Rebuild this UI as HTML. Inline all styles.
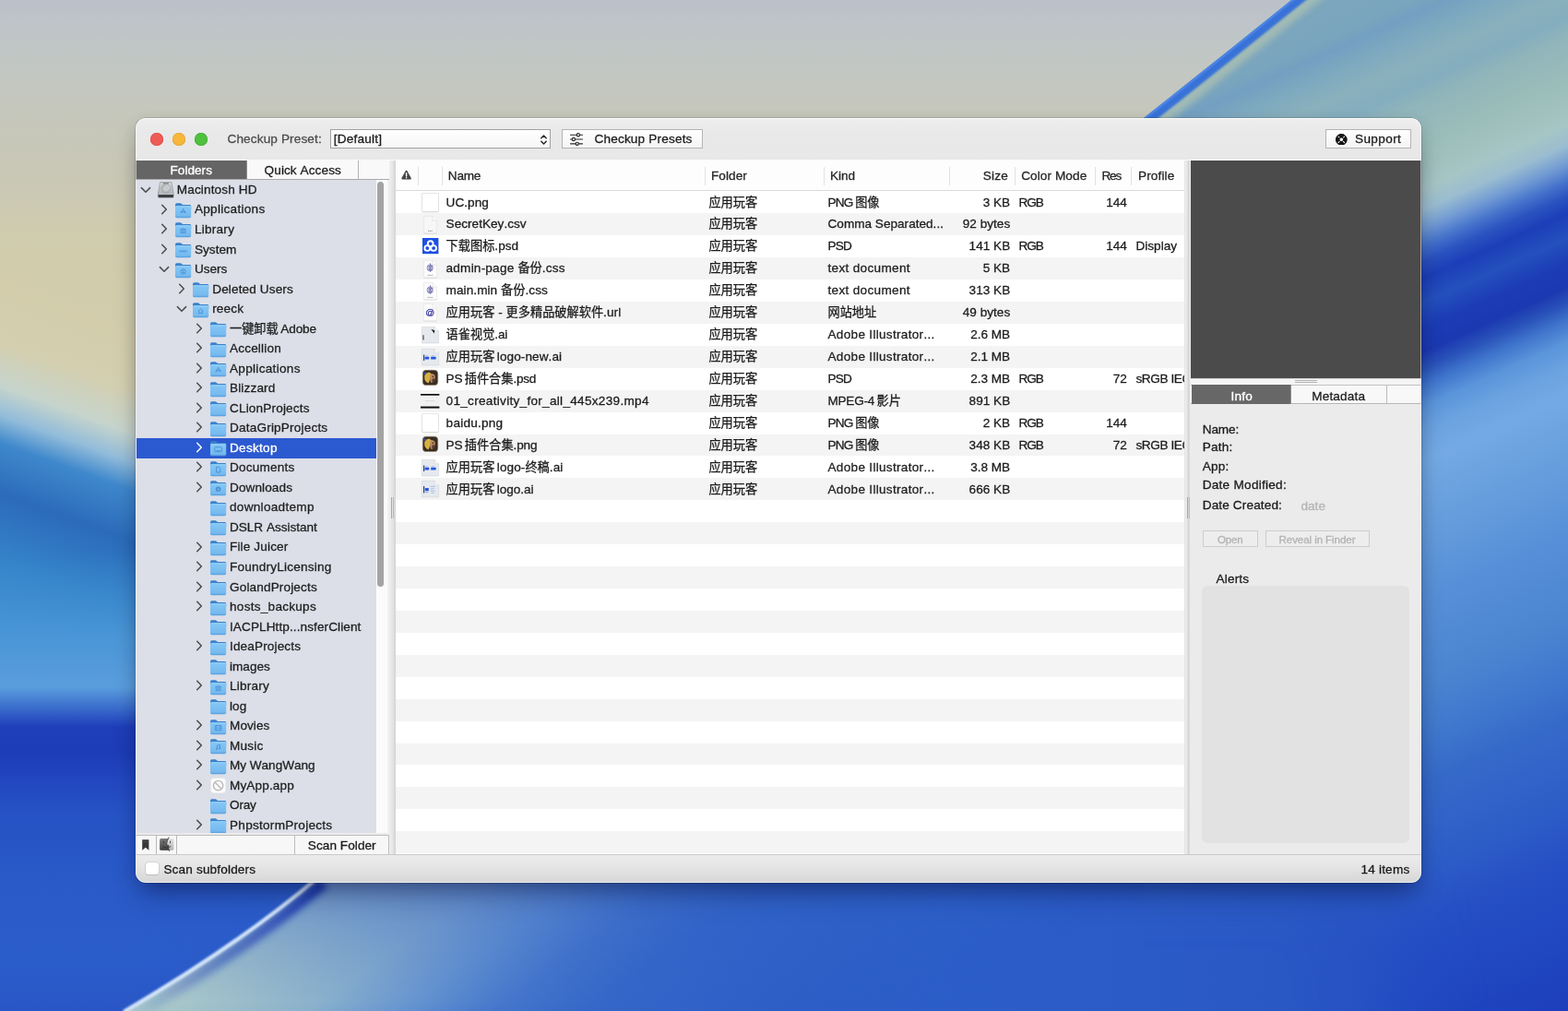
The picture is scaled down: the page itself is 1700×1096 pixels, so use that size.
<!DOCTYPE html><html lang="en"><head><meta charset="utf-8"><title>Checkup</title><style>html,body{margin:0;padding:0}body{width:1700px;height:1096px;position:relative;overflow:hidden;background:#2a58c6;font-family:"Liberation Sans","Noto Sans CJK SC",sans-serif;font-kerning:none;-webkit-font-smoothing:antialiased}
#wall{position:absolute;left:0;top:0;display:block}
#win{position:absolute;left:0;top:0;width:1700px;height:1096px;will-change:transform}
.t{position:absolute;white-space:nowrap;color:#1d1d1d;-webkit-text-stroke:.28px currentColor}
.cj{display:inline-block;font-family:"Liberation Sans","Noto Sans CJK SC",sans-serif;font-size:13.19px;letter-spacing:0;line-height:15px}
svg.ic{position:absolute;overflow:visible}
</style></head><body><svg width="0" height="0" style="position:absolute"><defs><linearGradient id="fTab" x1="0" y1="0" x2="0" y2="1"><stop offset="0" stop-color="#3a80c9"/><stop offset="1" stop-color="#4188d0"/></linearGradient>
<linearGradient id="fBody" x1="0" y1="0" x2="0" y2="1"><stop offset="0" stop-color="#8ccdf8"/><stop offset=".12" stop-color="#82c5f5"/><stop offset=".84" stop-color="#76b9ee"/><stop offset=".93" stop-color="#5ea8e4"/><stop offset="1" stop-color="#4f98dc"/></linearGradient>
<linearGradient id="hdBody" x1="0" y1="0" x2="0" y2="1"><stop offset="0" stop-color="#d9dbdd"/><stop offset="1" stop-color="#a9adb0"/></linearGradient>
</defs></svg><svg id="wall" width="1700" height="1096" viewBox="0 0 1700 1096">
<defs>
<linearGradient id="gBase" gradientUnits="userSpaceOnUse" x1="0" y1="0" x2="0" y2="1096"><stop offset="0.0000" stop-color="#bbc0c9"/><stop offset="0.0365" stop-color="#bfc6c7"/><stop offset="0.0730" stop-color="#c3c7c2"/><stop offset="0.1168" stop-color="#c6c7bb"/><stop offset="0.1734" stop-color="#c9c8b6"/><stop offset="0.2281" stop-color="#cfcbae"/><stop offset="0.2737" stop-color="#d3cdab"/><stop offset="0.3102" stop-color="#d3ceae"/><stop offset="0.7299" stop-color="#2a58c6"/><stop offset="1.0000" stop-color="#2855c5"/></linearGradient>
<linearGradient id="gL" gradientUnits="userSpaceOnUse" x1="31.9" y1="-88.5" x2="-350.6" y2="973.8"><stop offset="0.0000" stop-color="#bcc2c8"/><stop offset="0.0833" stop-color="#bcc2c8"/><stop offset="0.1900" stop-color="#c6c7bb"/><stop offset="0.2917" stop-color="#cfcbae"/><stop offset="0.3417" stop-color="#d3cdab"/><stop offset="0.3933" stop-color="#d3cfb0"/><stop offset="0.4317" stop-color="#c6d4cc"/><stop offset="0.4583" stop-color="#92bcda"/><stop offset="0.4833" stop-color="#3f88cc"/><stop offset="0.5292" stop-color="#2b6bba"/><stop offset="0.5917" stop-color="#3684ca"/><stop offset="0.6667" stop-color="#4a94d6"/><stop offset="1.0000" stop-color="#4a94d6"/></linearGradient>
<linearGradient id="gLD" gradientUnits="userSpaceOnUse" x1="0" y1="0" x2="0" y2="1096"><stop offset="0.0000" stop-color="#3886cc"/><stop offset="0.5474" stop-color="#3886cc"/><stop offset="0.6296" stop-color="#4a96d6"/><stop offset="0.6797" stop-color="#5a9ddd"/><stop offset="0.7007" stop-color="#3a6ccc"/><stop offset="0.7190" stop-color="#1e3eba"/><stop offset="0.7436" stop-color="#1c3cb8"/><stop offset="0.7755" stop-color="#2348c0"/><stop offset="0.8029" stop-color="#2552c4"/><stop offset="0.8759" stop-color="#2a5ac8"/><stop offset="0.9489" stop-color="#2a5cca"/><stop offset="1.0000" stop-color="#2956c6"/></linearGradient><linearGradient id="gR" gradientUnits="userSpaceOnUse" x1="224.5" y1="499.0" x2="696.4" y2="1547.6"><stop offset="0.0000" stop-color="#7fa8bc"/><stop offset="0.0714" stop-color="#7aa5be"/><stop offset="0.0833" stop-color="#73a0c1"/><stop offset="0.1031" stop-color="#7ea9bf"/><stop offset="0.1245" stop-color="#8ab0bc"/><stop offset="0.1459" stop-color="#84adbe"/><stop offset="0.1626" stop-color="#90b5ba"/><stop offset="0.2086" stop-color="#9ebfba"/><stop offset="0.2379" stop-color="#a6c5c6"/><stop offset="0.2554" stop-color="#9abdd0"/><stop offset="0.2712" stop-color="#739cd4"/><stop offset="0.2855" stop-color="#4875cc"/><stop offset="0.2998" stop-color="#2a52c0"/><stop offset="0.3140" stop-color="#1c3eb8"/><stop offset="0.3354" stop-color="#2450bd"/><stop offset="0.3569" stop-color="#1c3cb6"/><stop offset="0.3775" stop-color="#1b39b1"/><stop offset="0.3925" stop-color="#2a54ba"/><stop offset="0.4060" stop-color="#3f74cc"/><stop offset="0.4243" stop-color="#5a94da"/><stop offset="0.4441" stop-color="#6aa2e0"/><stop offset="0.4703" stop-color="#74aae4"/><stop offset="0.5178" stop-color="#68a0de"/><stop offset="0.5892" stop-color="#5890d8"/><stop offset="0.6685" stop-color="#4a84d0"/><stop offset="0.7082" stop-color="#4078ce"/><stop offset="0.7478" stop-color="#366ac9"/><stop offset="0.8271" stop-color="#2c5cc7"/><stop offset="0.8668" stop-color="#2650c4"/><stop offset="0.9429" stop-color="#2046c0"/><stop offset="1.0000" stop-color="#1d3ebc"/></linearGradient>
<linearGradient id="gDk" gradientUnits="userSpaceOnUse" x1="134" y1="1097" x2="346" y2="950"><stop offset="0" stop-color="#1b3cb4" stop-opacity="0"/><stop offset=".35" stop-color="#1b3cb4" stop-opacity=".35"/><stop offset="1" stop-color="#1a38ae" stop-opacity=".95"/></linearGradient><linearGradient id="gB" gradientUnits="userSpaceOnUse" x1="0" y1="0" x2="1700" y2="0"><stop offset="0" stop-color="#2a5cca"/><stop offset=".45" stop-color="#2a5ac6"/><stop offset=".6" stop-color="#2c5ec9"/><stop offset=".82" stop-color="#2958c5"/><stop offset="1" stop-color="#2046c0"/></linearGradient>
<linearGradient id="mLh" gradientUnits="userSpaceOnUse" x1="150" y1="0" x2="300" y2="0"><stop offset="0" stop-color="#fff"/><stop offset="1" stop-color="#000"/></linearGradient>
<linearGradient id="mBv" gradientUnits="userSpaceOnUse" x1="0" y1="900" x2="0" y2="965"><stop offset="0" stop-color="#000"/><stop offset="1" stop-color="#fff"/></linearGradient>
<linearGradient id="mBh" gradientUnits="userSpaceOnUse" x1="100" y1="0" x2="330" y2="0"><stop offset="0" stop-color="#000"/><stop offset="1" stop-color="#fff"/></linearGradient>
<linearGradient id="gP" gradientUnits="userSpaceOnUse" x1="134" y1="1097" x2="430.4" y2="1523.4"><stop offset="0" stop-color="#acc9cc"/><stop offset=".058" stop-color="#a6c5c9"/><stop offset=".217" stop-color="#8ab0cc"/><stop offset=".327" stop-color="#6a98d0" stop-opacity=".95"/><stop offset=".437" stop-color="#4a7ccc" stop-opacity=".85"/><stop offset=".546" stop-color="#3a6ec9" stop-opacity=".7"/><stop offset=".7" stop-color="#3468c8" stop-opacity=".5"/><stop offset="1" stop-color="#2c5cc8" stop-opacity="0"/></linearGradient>
<filter id="b1" x="-20%" y="-20%" width="140%" height="140%"><feGaussianBlur stdDeviation="1"/></filter>
<filter id="b4" x="-20%" y="-20%" width="140%" height="140%"><feGaussianBlur stdDeviation="3.5"/></filter>
<filter id="b40" x="-30%" y="-30%" width="160%" height="160%"><feGaussianBlur stdDeviation="45"/></filter>
<linearGradient id="mLv" gradientUnits="userSpaceOnUse" x1="0" y1="270" x2="0" y2="345"><stop offset="0" stop-color="#000"/><stop offset="1" stop-color="#000" stop-opacity="0"/></linearGradient><linearGradient id="mLv2" gradientUnits="userSpaceOnUse" x1="0" y1="600" x2="0" y2="690"><stop offset="0" stop-color="#000" stop-opacity="0"/><stop offset="1" stop-color="#000"/></linearGradient><linearGradient id="mLv3" gradientUnits="userSpaceOnUse" x1="0" y1="560" x2="0" y2="600"><stop offset="0" stop-color="#000"/><stop offset="1" stop-color="#000" stop-opacity="0"/></linearGradient><mask id="mL" maskUnits="userSpaceOnUse" x="0" y="0" width="1700" height="1096"><rect width="1700" height="1096" fill="url(#mLh)"/><rect width="1700" height="1096" fill="url(#mLv)"/><rect width="1700" height="1096" fill="url(#mLv2)"/></mask><mask id="mLD" maskUnits="userSpaceOnUse" x="0" y="0" width="1700" height="1096"><rect width="1700" height="1096" fill="url(#mLh)"/><rect width="1700" height="1096" fill="url(#mLv3)"/></mask>
<linearGradient id="mPv" gradientUnits="userSpaceOnUse" x1="0" y1="940" x2="0" y2="1085"><stop offset="0" stop-color="#6a6a6a"/><stop offset="1" stop-color="#fff"/></linearGradient><mask id="mP" maskUnits="userSpaceOnUse" x="0" y="0" width="1700" height="1096"><rect width="1700" height="1096" fill="url(#mPv)"/></mask><mask id="mB" maskUnits="userSpaceOnUse" x="0" y="0" width="1700" height="1096"><rect width="1700" height="1096" fill="url(#mBv)"/></mask>
<mask id="mR" maskUnits="userSpaceOnUse" x="0" y="0" width="1700" height="1096"><path d="M1200 -100H1900V1300H1560L1480 920H1200Z" fill="#fff" filter="url(#b40)"/><path d="M1200 -100H1900V900H1200Z" fill="#fff"/></mask>
<clipPath id="cpR"><path d="M1400.7 -0.5 Q1322 63 1239.8 128 V1096 H1700 V-0.5Z"/></clipPath>
<clipPath id="cpB"><path d="M134 1097 Q262 1022 346 950 L700 700 H1700 V1097Z"/></clipPath>
</defs>
<rect width="1700" height="1096" fill="url(#gBase)"/>
<g mask="url(#mB)"><rect x="0" y="890" width="1700" height="206" fill="url(#gB)"/></g>
<g mask="url(#mLD)"><rect width="320" height="1096" fill="url(#gLD)"/></g><g mask="url(#mL)"><rect width="320" height="1096" fill="url(#gL)"/></g>
<g clip-path="url(#cpB)"><g mask="url(#mP)"><rect x="0" y="700" width="1500" height="400" fill="url(#gP)"/></g></g>
<g clip-path="url(#cpB)"><path d="M134 1097 Q262 1022 346 950" transform="translate(5 7)" stroke="url(#gDk)" stroke-width="13" fill="none" filter="url(#b4)"/></g><path d="M134 1097 Q262 1022 346 950" stroke="#d3e5fa" stroke-width="4.2" fill="none" filter="url(#b1)"/>
<g clip-path="url(#cpR)"><g mask="url(#mR)"><rect x="1150" y="0" width="550" height="1096" fill="url(#gR)"/></g>
<path d="M1452 -41 L1400.7 -0.5 Q1322 63 1239.8 128 L1180 175" transform="translate(7.5 9.5)" stroke="#a9bfb4" stroke-width="15" fill="none" filter="url(#b4)" opacity=".85"/>
<path d="M1452 -41 L1400.7 -0.5 Q1322 63 1239.8 128 L1180 175" transform="translate(2.8 3.5)" stroke="#3872d8" stroke-width="11" fill="none" filter="url(#b1)"/>
<path d="M1452 -41 L1400.7 -0.5 Q1322 63 1239.8 128 L1180 175" transform="translate(.6 .8)" stroke="#5f94f2" stroke-width="2" fill="none" filter="url(#b1)" opacity=".9"/>
</g>
</svg><div class="" style="position:absolute;left:147.00px;top:128.00px;width:1394.00px;height:829.00px;border-radius:11px;box-shadow:0 0 0 .5px rgba(0,0,0,.25),0 18px 30px -8px rgba(0,0,40,.38),0 5px 16px rgba(0,0,30,.13);"></div><div id="win" style="clip-path:inset(128px 159px 139px 147px round 11px)"><div class="" style="position:absolute;left:147.00px;top:128.00px;width:1394.00px;height:829.00px;background:#ebebeb;"></div><div class="" style="position:absolute;left:147.00px;top:128.00px;width:1394.00px;height:45.00px;background:linear-gradient(#eeeeee,#e9e9e9 30%,#e8e8e8);border-top:1px solid #f8f8f8;box-sizing:border-box;"></div><div class="" style="position:absolute;left:147.00px;top:172.50px;width:1394.00px;height:1.30px;background:#fafafa;"></div><div class="" style="position:absolute;left:162.90px;top:143.60px;width:14.20px;height:14.20px;border-radius:50%;background:#ee5b55;box-shadow:inset 0 0 0 .6px #d9443f;"></div><div class="" style="position:absolute;left:186.70px;top:143.60px;width:14.20px;height:14.20px;border-radius:50%;background:#f6b73a;box-shadow:inset 0 0 0 .6px #dc9e2b;"></div><div class="" style="position:absolute;left:210.60px;top:143.60px;width:14.20px;height:14.20px;border-radius:50%;background:#4fc13e;box-shadow:inset 0 0 0 .6px #3aa62c;"></div><div class="t " style="top:142.70px;font-size:13.6px;line-height:15px;letter-spacing:0.121px;letter-spacing:0.12144396551724118px;left:246.50px;color:#4c4c4c;">Checkup Preset:</div><div class="" style="position:absolute;left:358.00px;top:140.30px;width:238.90px;height:21.20px;background:linear-gradient(#ffffff,#f6f6f6);border:1px solid #a2a2a2;box-sizing:border-box;"></div><div class="t " style="top:142.70px;font-size:13.6px;line-height:15px;letter-spacing:0.194px;letter-spacing:0.19434742647058806px;left:361.80px;color:#1c1c1c;">[Default]</div><svg style="position:absolute;left:584.5px;top:144.5px" width="9" height="13" viewBox="0 0 9 13"><path d="M1.8 4.7 L4.5 2 L7.2 4.7 M1.8 8.3 L4.5 11 L7.2 8.3" fill="none" stroke="#2a2a2a" stroke-width="1.5" stroke-linecap="round" stroke-linejoin="round"/></svg><div class="" style="position:absolute;left:609.00px;top:140.30px;width:153.00px;height:21.20px;background:linear-gradient(#ffffff,#f4f4f4);border:1px solid #b4b4b4;box-sizing:border-box;"></div><svg style="position:absolute;left:617px;top:143px" width="16" height="16" viewBox="0 0 16 16"><g fill="none" stroke="#2a2a2a" stroke-width="1.15" stroke-linecap="round"><path d="M1.5 3.2H8.2M11.6 3.2H14.5M1.5 8H3.2M6.6 8H14.5M1.5 12.8H7M10.4 12.8H14.5"/><circle cx="9.9" cy="3.2" r="1.6"/><circle cx="4.9" cy="8" r="1.6"/><circle cx="8.7" cy="12.8" r="1.6"/></g></svg><div class="t " style="top:142.70px;font-size:13.6px;line-height:15px;letter-spacing:0.168px;letter-spacing:0.16823814655172414px;left:644.50px;color:#1c1c1c;">Checkup Presets</div><div class="" style="position:absolute;left:1437.00px;top:140.30px;width:92.70px;height:21.20px;background:linear-gradient(#ffffff,#f4f4f4);border:1px solid #b4b4b4;box-sizing:border-box;"></div><svg style="position:absolute;left:1448.3px;top:144.5px" width="12.6" height="12.6" viewBox="0 0 12.6 12.6"><circle cx="6.3" cy="6.3" r="4.1" fill="none" stroke="#161616" stroke-width="4.2"/><g stroke="#fff" stroke-width="1.05"><path d="M2.5 2.5L4.5 4.5M10.1 2.5L8.1 4.5M2.5 10.1L4.5 8.1M10.1 10.1L8.1 8.1"/></g><circle cx="6.3" cy="6.3" r="5.75" fill="none" stroke="#161616" stroke-width="1"/><circle cx="6.3" cy="6.3" r="2.35" fill="none" stroke="#161616" stroke-width=".7"/></svg><div class="t " style="top:142.70px;font-size:13.6px;line-height:15px;letter-spacing:0.364px;letter-spacing:0.36412259615384596px;left:1469.00px;color:#1c1c1c;">Support</div><div class="" style="position:absolute;left:147.30px;top:174.00px;width:274.70px;height:20.60px;background:#f9f9f9;"></div><div class="" style="position:absolute;left:147.30px;top:174.00px;width:119.90px;height:20.60px;background:#656565;"></div><div class="" style="position:absolute;left:267.20px;top:174.00px;width:0.80px;height:20.20px;background:#8e8e8e;"></div><div class="" style="position:absolute;left:387.60px;top:174.00px;width:1.00px;height:20.20px;background:#b3b3b3;"></div><div class="" style="position:absolute;left:148.00px;top:193.90px;width:274.00px;height:1.00px;background:#a9a9a9;"></div><div class="t " style="top:177.20px;font-size:13.6px;line-height:15px;letter-spacing:0.023px;letter-spacing:0.023257211538461976px;left:184.50px;color:#ffffff;-webkit-text-stroke:.35px #fff;">Folders</div><div class="t " style="top:177.20px;font-size:13.6px;line-height:15px;letter-spacing:0.080px;letter-spacing:0.08026494565217367px;left:286.60px;color:#1a1a1a;">Quick Access</div><div class="" style="position:absolute;left:147.30px;top:194.90px;width:260.50px;height:708.50px;background:#dcdfe8;"></div><div class="" style="position:absolute;left:407.80px;top:194.90px;width:12.20px;height:708.50px;background:#fbfbfb;"></div><div class="" style="position:absolute;left:409.20px;top:197.00px;width:6.80px;height:438.80px;background:#a3a3a3;border-radius:3.5px;"></div><div class="" style="position:absolute;left:419.60px;top:194.90px;width:9.60px;height:709.70px;background:linear-gradient(90deg,#f4f4f4,#ebebeb 35%,#e2e2e2 70%,#d2d2d2);"></div><div class="" style="position:absolute;left:422.00px;top:174.00px;width:7.20px;height:20.90px;background:linear-gradient(90deg,#f0f0f0,#e6e6e6 50%,#d2d2d2);"></div><div class="" style="position:absolute;left:422.00px;top:904.60px;width:7.20px;height:21.80px;background:linear-gradient(90deg,#f0f0f0,#e6e6e6 50%,#d2d2d2);"></div><div class="" style="position:absolute;left:424.20px;top:539.00px;width:1.10px;height:23.00px;background:#a8a8a8;"></div><div class="" style="position:absolute;left:426.40px;top:539.00px;width:0.80px;height:23.00px;background:#b8b8b8;"></div><div style="position:absolute;left:148px;top:194.9px;width:259.8px;height:708.5px;overflow:hidden"><div style="position:absolute;left:-148px;top:-194.9px;width:1700px;height:1096px"><svg class="ic" style="left:152.00px;top:201.75px" width="12" height="8" viewBox="0 0 12 8"><path d="M1.4 1.6L6 6.2L10.6 1.6" fill="none" stroke="#4d4d4d" stroke-width="1.55" stroke-linecap="round" stroke-linejoin="round"/></svg><svg class="ic" style="left:170.70px;top:196.75px" width="17.6" height="17.6" viewBox="0 0 17.6 17.6"><path d="M2.6 .6H15L17.2 13.4V16.2Q17.2 17.2 16.2 17.2H1.4Q.4 17.2 .4 16.2V13.4Z" fill="url(#hdBody)" stroke="#7d8083" stroke-width=".6"/><path d="M.6 13.6H17V16Q17 17 16 17H1.6Q.6 17 .6 16Z" fill="#3c3f42"/><path d="M.6 13.5H17" stroke="#e4e6e8" stroke-width=".7"/><ellipse cx="8.8" cy="7.4" rx="5.2" ry="4.9" fill="#c9ccce" stroke="#8d9194" stroke-width=".6"/><path d="M8.8 3.6A3.8 3.8 0 1 0 12.4 8.2" fill="none" stroke="#989c9f" stroke-width=".8"/><circle cx="8.8" cy="7.4" r="1.1" fill="#eceeef" stroke="#8d9194" stroke-width=".4"/><rect x="5.4" y="1.2" width="6.8" height="1.1" rx=".5" fill="#6e7275"/></svg><div class="t " style="top:197.95px;font-size:13.6px;line-height:15px;letter-spacing:0.130px;letter-spacing:0.1299932065217369px;left:191.80px;color:#1e1e1e;">Macintosh HD</div><svg class="ic" style="left:174.20px;top:220.58px" width="8" height="12" viewBox="0 0 8 12"><path d="M1.7 1.3L6.3 6L1.7 10.7" fill="none" stroke="#4d4d4d" stroke-width="1.55" stroke-linecap="round" stroke-linejoin="round"/></svg><svg class="ic" style="left:190.00px;top:219.93px" width="17.2" height="16.2" viewBox="0 0 17.2 16.2"><path d="M0 2Q0 .3 1.6 .3H5.4Q6.3 .3 6.9 .9L7.7 1.7Q8.1 2.1 8.9 2.1H15.7Q17.2 2.1 17.2 3.6V7H0Z" fill="url(#fTab)"/><path d="M0 4.5Q0 3.3 1.3 3.3H15.9Q17.2 3.3 17.2 4.5V14.6Q17.2 16.2 15.6 16.2H1.6Q0 16.2 0 14.6Z" fill="url(#fBody)"/><path d="M.5 3.75H16.7" stroke="#b4e2ff" stroke-width=".55" opacity=".9"/><g transform="translate(0 .35)"><path d="M8.6 6.3L6.3 10.6M8.6 6.3L10.9 10.6M6 9.4H11.2" stroke="#4690d6" stroke-width=".9" fill="none" stroke-linecap="round"/></g></svg><div class="t " style="top:219.48px;font-size:13.6px;line-height:15px;letter-spacing:0.275px;letter-spacing:0.2754415760869545px;left:210.90px;color:#1e1e1e;">Applications</div><svg class="ic" style="left:174.20px;top:242.11px" width="8" height="12" viewBox="0 0 8 12"><path d="M1.7 1.3L6.3 6L1.7 10.7" fill="none" stroke="#4d4d4d" stroke-width="1.55" stroke-linecap="round" stroke-linejoin="round"/></svg><svg class="ic" style="left:190.00px;top:241.46px" width="17.2" height="16.2" viewBox="0 0 17.2 16.2"><path d="M0 2Q0 .3 1.6 .3H5.4Q6.3 .3 6.9 .9L7.7 1.7Q8.1 2.1 8.9 2.1H15.7Q17.2 2.1 17.2 3.6V7H0Z" fill="url(#fTab)"/><path d="M0 4.5Q0 3.3 1.3 3.3H15.9Q17.2 3.3 17.2 4.5V14.6Q17.2 16.2 15.6 16.2H1.6Q0 16.2 0 14.6Z" fill="url(#fBody)"/><path d="M.5 3.75H16.7" stroke="#b4e2ff" stroke-width=".55" opacity=".9"/><g transform="translate(0 .35)"><path d="M5.5 7.6L8.6 6.2L11.7 7.6ZM6.2 8.2V10.6M7.8 8.2V10.6M9.4 8.2V10.6M11 8.2V10.6M5.5 11.2H11.7" stroke="#4690d6" stroke-width=".8" fill="none"/></g></svg><div class="t " style="top:241.01px;font-size:13.6px;line-height:15px;letter-spacing:0.251px;letter-spacing:0.2507211538461521px;left:210.90px;color:#1e1e1e;">Library</div><svg class="ic" style="left:174.20px;top:263.64px" width="8" height="12" viewBox="0 0 8 12"><path d="M1.7 1.3L6.3 6L1.7 10.7" fill="none" stroke="#4d4d4d" stroke-width="1.55" stroke-linecap="round" stroke-linejoin="round"/></svg><svg class="ic" style="left:190.00px;top:262.99px" width="17.2" height="16.2" viewBox="0 0 17.2 16.2"><path d="M0 2Q0 .3 1.6 .3H5.4Q6.3 .3 6.9 .9L7.7 1.7Q8.1 2.1 8.9 2.1H15.7Q17.2 2.1 17.2 3.6V7H0Z" fill="url(#fTab)"/><path d="M0 4.5Q0 3.3 1.3 3.3H15.9Q17.2 3.3 17.2 4.5V14.6Q17.2 16.2 15.6 16.2H1.6Q0 16.2 0 14.6Z" fill="url(#fBody)"/><path d="M.5 3.75H16.7" stroke="#b4e2ff" stroke-width=".55" opacity=".9"/><g transform="translate(0 .35)"><path d="M4.6 9H12.6" stroke="#4690d6" stroke-width="1.6" stroke-dasharray="1.2 .5" fill="none"/></g></svg><div class="t " style="top:262.54px;font-size:13.6px;line-height:15px;letter-spacing:0.029px;letter-spacing:0.028693181818176393px;left:210.90px;color:#1e1e1e;">System</div><svg class="ic" style="left:172.20px;top:287.87px" width="12" height="8" viewBox="0 0 12 8"><path d="M1.4 1.6L6 6.2L10.6 1.6" fill="none" stroke="#4d4d4d" stroke-width="1.55" stroke-linecap="round" stroke-linejoin="round"/></svg><svg class="ic" style="left:190.00px;top:284.52px" width="17.2" height="16.2" viewBox="0 0 17.2 16.2"><path d="M0 2Q0 .3 1.6 .3H5.4Q6.3 .3 6.9 .9L7.7 1.7Q8.1 2.1 8.9 2.1H15.7Q17.2 2.1 17.2 3.6V7H0Z" fill="url(#fTab)"/><path d="M0 4.5Q0 3.3 1.3 3.3H15.9Q17.2 3.3 17.2 4.5V14.6Q17.2 16.2 15.6 16.2H1.6Q0 16.2 0 14.6Z" fill="url(#fBody)"/><path d="M.5 3.75H16.7" stroke="#b4e2ff" stroke-width=".55" opacity=".9"/><g transform="translate(0 .35)"><circle cx="8.6" cy="9" r="2.7" fill="none" stroke="#4690d6" stroke-width=".9"/><circle cx="8.6" cy="8.2" r=".9" fill="#4690d6"/><path d="M6.9 10.7Q8.6 8.8 10.3 10.7" fill="#4690d6"/></g></svg><div class="t " style="top:284.07px;font-size:13.6px;line-height:15px;letter-spacing:-0.003px;letter-spacing:-0.003125000000000316px;left:210.90px;color:#1e1e1e;">Users</div><svg class="ic" style="left:193.40px;top:306.70px" width="8" height="12" viewBox="0 0 8 12"><path d="M1.7 1.3L6.3 6L1.7 10.7" fill="none" stroke="#4d4d4d" stroke-width="1.55" stroke-linecap="round" stroke-linejoin="round"/></svg><svg class="ic" style="left:209.30px;top:306.05px" width="17.2" height="16.2" viewBox="0 0 17.2 16.2"><path d="M0 2Q0 .3 1.6 .3H5.4Q6.3 .3 6.9 .9L7.7 1.7Q8.1 2.1 8.9 2.1H15.7Q17.2 2.1 17.2 3.6V7H0Z" fill="url(#fTab)"/><path d="M0 4.5Q0 3.3 1.3 3.3H15.9Q17.2 3.3 17.2 4.5V14.6Q17.2 16.2 15.6 16.2H1.6Q0 16.2 0 14.6Z" fill="url(#fBody)"/><path d="M.5 3.75H16.7" stroke="#b4e2ff" stroke-width=".55" opacity=".9"/><g transform="translate(0 .35)"></g></svg><div class="t " style="top:305.60px;font-size:13.6px;line-height:15px;letter-spacing:0.122px;letter-spacing:0.12249999999999886px;left:230.20px;color:#1e1e1e;">Deleted Users</div><svg class="ic" style="left:191.40px;top:330.93px" width="12" height="8" viewBox="0 0 12 8"><path d="M1.4 1.6L6 6.2L10.6 1.6" fill="none" stroke="#4d4d4d" stroke-width="1.55" stroke-linecap="round" stroke-linejoin="round"/></svg><svg class="ic" style="left:209.30px;top:327.58px" width="17.2" height="16.2" viewBox="0 0 17.2 16.2"><path d="M0 2Q0 .3 1.6 .3H5.4Q6.3 .3 6.9 .9L7.7 1.7Q8.1 2.1 8.9 2.1H15.7Q17.2 2.1 17.2 3.6V7H0Z" fill="url(#fTab)"/><path d="M0 4.5Q0 3.3 1.3 3.3H15.9Q17.2 3.3 17.2 4.5V14.6Q17.2 16.2 15.6 16.2H1.6Q0 16.2 0 14.6Z" fill="url(#fBody)"/><path d="M.5 3.75H16.7" stroke="#b4e2ff" stroke-width=".55" opacity=".9"/><g transform="translate(0 .35)"><path d="M6 9L8.6 6.6L11.2 9M6.8 8.6V11.2H10.4V8.6" stroke="#4690d6" stroke-width=".9" fill="none"/></g></svg><div class="t " style="top:327.13px;font-size:13.6px;line-height:15px;letter-spacing:0.143px;letter-spacing:0.14305555555556282px;left:230.20px;color:#1e1e1e;">reeck</div><svg class="ic" style="left:212.30px;top:349.76px" width="8" height="12" viewBox="0 0 8 12"><path d="M1.7 1.3L6.3 6L1.7 10.7" fill="none" stroke="#4d4d4d" stroke-width="1.55" stroke-linecap="round" stroke-linejoin="round"/></svg><svg class="ic" style="left:228.20px;top:349.11px" width="17.2" height="16.2" viewBox="0 0 17.2 16.2"><path d="M0 2Q0 .3 1.6 .3H5.4Q6.3 .3 6.9 .9L7.7 1.7Q8.1 2.1 8.9 2.1H15.7Q17.2 2.1 17.2 3.6V7H0Z" fill="url(#fTab)"/><path d="M0 4.5Q0 3.3 1.3 3.3H15.9Q17.2 3.3 17.2 4.5V14.6Q17.2 16.2 15.6 16.2H1.6Q0 16.2 0 14.6Z" fill="url(#fBody)"/><path d="M.5 3.75H16.7" stroke="#b4e2ff" stroke-width=".55" opacity=".9"/><g transform="translate(0 .35)"></g></svg><div class="t " style="top:348.66px;font-size:13.6px;line-height:15px;letter-spacing:-0.118px;letter-spacing:-0.11767779411764469px;left:249.00px;color:#1e1e1e;"><span class="cj" style="margin:0 2.51px 0 0.00px">一键卸载</span>Adobe</div><svg class="ic" style="left:212.30px;top:371.29px" width="8" height="12" viewBox="0 0 8 12"><path d="M1.7 1.3L6.3 6L1.7 10.7" fill="none" stroke="#4d4d4d" stroke-width="1.55" stroke-linecap="round" stroke-linejoin="round"/></svg><svg class="ic" style="left:228.20px;top:370.64px" width="17.2" height="16.2" viewBox="0 0 17.2 16.2"><path d="M0 2Q0 .3 1.6 .3H5.4Q6.3 .3 6.9 .9L7.7 1.7Q8.1 2.1 8.9 2.1H15.7Q17.2 2.1 17.2 3.6V7H0Z" fill="url(#fTab)"/><path d="M0 4.5Q0 3.3 1.3 3.3H15.9Q17.2 3.3 17.2 4.5V14.6Q17.2 16.2 15.6 16.2H1.6Q0 16.2 0 14.6Z" fill="url(#fBody)"/><path d="M.5 3.75H16.7" stroke="#b4e2ff" stroke-width=".55" opacity=".9"/><g transform="translate(0 .35)"></g></svg><div class="t " style="top:370.19px;font-size:13.6px;line-height:15px;letter-spacing:0.162px;letter-spacing:0.16158088235294302px;left:249.00px;color:#1e1e1e;">Accellion</div><svg class="ic" style="left:212.30px;top:392.82px" width="8" height="12" viewBox="0 0 8 12"><path d="M1.7 1.3L6.3 6L1.7 10.7" fill="none" stroke="#4d4d4d" stroke-width="1.55" stroke-linecap="round" stroke-linejoin="round"/></svg><svg class="ic" style="left:228.20px;top:392.17px" width="17.2" height="16.2" viewBox="0 0 17.2 16.2"><path d="M0 2Q0 .3 1.6 .3H5.4Q6.3 .3 6.9 .9L7.7 1.7Q8.1 2.1 8.9 2.1H15.7Q17.2 2.1 17.2 3.6V7H0Z" fill="url(#fTab)"/><path d="M0 4.5Q0 3.3 1.3 3.3H15.9Q17.2 3.3 17.2 4.5V14.6Q17.2 16.2 15.6 16.2H1.6Q0 16.2 0 14.6Z" fill="url(#fBody)"/><path d="M.5 3.75H16.7" stroke="#b4e2ff" stroke-width=".55" opacity=".9"/><g transform="translate(0 .35)"><path d="M8.6 6.3L6.3 10.6M8.6 6.3L10.9 10.6M6 9.4H11.2" stroke="#4690d6" stroke-width=".9" fill="none" stroke-linecap="round"/></g></svg><div class="t " style="top:391.72px;font-size:13.6px;line-height:15px;letter-spacing:0.284px;letter-spacing:0.284137228260872px;left:249.00px;color:#1e1e1e;">Applications</div><svg class="ic" style="left:212.30px;top:414.35px" width="8" height="12" viewBox="0 0 8 12"><path d="M1.7 1.3L6.3 6L1.7 10.7" fill="none" stroke="#4d4d4d" stroke-width="1.55" stroke-linecap="round" stroke-linejoin="round"/></svg><svg class="ic" style="left:228.20px;top:413.70px" width="17.2" height="16.2" viewBox="0 0 17.2 16.2"><path d="M0 2Q0 .3 1.6 .3H5.4Q6.3 .3 6.9 .9L7.7 1.7Q8.1 2.1 8.9 2.1H15.7Q17.2 2.1 17.2 3.6V7H0Z" fill="url(#fTab)"/><path d="M0 4.5Q0 3.3 1.3 3.3H15.9Q17.2 3.3 17.2 4.5V14.6Q17.2 16.2 15.6 16.2H1.6Q0 16.2 0 14.6Z" fill="url(#fBody)"/><path d="M.5 3.75H16.7" stroke="#b4e2ff" stroke-width=".55" opacity=".9"/><g transform="translate(0 .35)"></g></svg><div class="t " style="top:413.25px;font-size:13.6px;line-height:15px;letter-spacing:0.137px;letter-spacing:0.137291666666664px;left:249.00px;color:#1e1e1e;">Blizzard</div><svg class="ic" style="left:212.30px;top:435.88px" width="8" height="12" viewBox="0 0 8 12"><path d="M1.7 1.3L6.3 6L1.7 10.7" fill="none" stroke="#4d4d4d" stroke-width="1.55" stroke-linecap="round" stroke-linejoin="round"/></svg><svg class="ic" style="left:228.20px;top:435.23px" width="17.2" height="16.2" viewBox="0 0 17.2 16.2"><path d="M0 2Q0 .3 1.6 .3H5.4Q6.3 .3 6.9 .9L7.7 1.7Q8.1 2.1 8.9 2.1H15.7Q17.2 2.1 17.2 3.6V7H0Z" fill="url(#fTab)"/><path d="M0 4.5Q0 3.3 1.3 3.3H15.9Q17.2 3.3 17.2 4.5V14.6Q17.2 16.2 15.6 16.2H1.6Q0 16.2 0 14.6Z" fill="url(#fBody)"/><path d="M.5 3.75H16.7" stroke="#b4e2ff" stroke-width=".55" opacity=".9"/><g transform="translate(0 .35)"></g></svg><div class="t " style="top:434.78px;font-size:13.6px;line-height:15px;letter-spacing:0.155px;letter-spacing:0.15509375000000206px;left:249.00px;color:#1e1e1e;">CLionProjects</div><svg class="ic" style="left:212.30px;top:457.41px" width="8" height="12" viewBox="0 0 8 12"><path d="M1.7 1.3L6.3 6L1.7 10.7" fill="none" stroke="#4d4d4d" stroke-width="1.55" stroke-linecap="round" stroke-linejoin="round"/></svg><svg class="ic" style="left:228.20px;top:456.76px" width="17.2" height="16.2" viewBox="0 0 17.2 16.2"><path d="M0 2Q0 .3 1.6 .3H5.4Q6.3 .3 6.9 .9L7.7 1.7Q8.1 2.1 8.9 2.1H15.7Q17.2 2.1 17.2 3.6V7H0Z" fill="url(#fTab)"/><path d="M0 4.5Q0 3.3 1.3 3.3H15.9Q17.2 3.3 17.2 4.5V14.6Q17.2 16.2 15.6 16.2H1.6Q0 16.2 0 14.6Z" fill="url(#fBody)"/><path d="M.5 3.75H16.7" stroke="#b4e2ff" stroke-width=".55" opacity=".9"/><g transform="translate(0 .35)"></g></svg><div class="t " style="top:456.31px;font-size:13.6px;line-height:15px;letter-spacing:0.178px;letter-spacing:0.17759576612903336px;left:249.00px;color:#1e1e1e;">DataGripProjects</div><div class="" style="position:absolute;left:148.00px;top:475.34px;width:259.80px;height:21.50px;background:#2b59d0;"></div><svg class="ic" style="left:212.30px;top:478.94px" width="8" height="12" viewBox="0 0 8 12"><path d="M1.7 1.3L6.3 6L1.7 10.7" fill="none" stroke="#ffffff" stroke-width="1.55" stroke-linecap="round" stroke-linejoin="round"/></svg><svg class="ic" style="left:228.20px;top:478.29px" width="17.2" height="16.2" viewBox="0 0 17.2 16.2"><path d="M0 2Q0 .3 1.6 .3H5.4Q6.3 .3 6.9 .9L7.7 1.7Q8.1 2.1 8.9 2.1H15.7Q17.2 2.1 17.2 3.6V7H0Z" fill="url(#fTab)"/><path d="M0 4.5Q0 3.3 1.3 3.3H15.9Q17.2 3.3 17.2 4.5V14.6Q17.2 16.2 15.6 16.2H1.6Q0 16.2 0 14.6Z" fill="url(#fBody)"/><path d="M.5 3.75H16.7" stroke="#b4e2ff" stroke-width=".55" opacity=".9"/><g transform="translate(0 .35)"><rect x="4.8" y="6.4" width="7.6" height="5" rx=".6" fill="none" stroke="#4690d6" stroke-width=".9"/><path d="M6.6 10.2H10.6" stroke="#4690d6" stroke-width=".8"/></g></svg><div class="t " style="top:477.84px;font-size:13.6px;line-height:15px;letter-spacing:0.263px;letter-spacing:0.26292067307692635px;left:249.00px;color:#ffffff;-webkit-text-stroke:.3px #fff;">Desktop</div><svg class="ic" style="left:212.30px;top:500.47px" width="8" height="12" viewBox="0 0 8 12"><path d="M1.7 1.3L6.3 6L1.7 10.7" fill="none" stroke="#4d4d4d" stroke-width="1.55" stroke-linecap="round" stroke-linejoin="round"/></svg><svg class="ic" style="left:228.20px;top:499.82px" width="17.2" height="16.2" viewBox="0 0 17.2 16.2"><path d="M0 2Q0 .3 1.6 .3H5.4Q6.3 .3 6.9 .9L7.7 1.7Q8.1 2.1 8.9 2.1H15.7Q17.2 2.1 17.2 3.6V7H0Z" fill="url(#fTab)"/><path d="M0 4.5Q0 3.3 1.3 3.3H15.9Q17.2 3.3 17.2 4.5V14.6Q17.2 16.2 15.6 16.2H1.6Q0 16.2 0 14.6Z" fill="url(#fBody)"/><path d="M.5 3.75H16.7" stroke="#b4e2ff" stroke-width=".55" opacity=".9"/><g transform="translate(0 .35)"><path d="M6.6 5.8H9.4L10.8 7.2V11.6H6.6Z" fill="none" stroke="#4690d6" stroke-width=".9"/></g></svg><div class="t " style="top:499.37px;font-size:13.6px;line-height:15px;letter-spacing:0.190px;letter-spacing:0.19016544117646858px;left:249.00px;color:#1e1e1e;">Documents</div><svg class="ic" style="left:212.30px;top:522.00px" width="8" height="12" viewBox="0 0 8 12"><path d="M1.7 1.3L6.3 6L1.7 10.7" fill="none" stroke="#4d4d4d" stroke-width="1.55" stroke-linecap="round" stroke-linejoin="round"/></svg><svg class="ic" style="left:228.20px;top:521.35px" width="17.2" height="16.2" viewBox="0 0 17.2 16.2"><path d="M0 2Q0 .3 1.6 .3H5.4Q6.3 .3 6.9 .9L7.7 1.7Q8.1 2.1 8.9 2.1H15.7Q17.2 2.1 17.2 3.6V7H0Z" fill="url(#fTab)"/><path d="M0 4.5Q0 3.3 1.3 3.3H15.9Q17.2 3.3 17.2 4.5V14.6Q17.2 16.2 15.6 16.2H1.6Q0 16.2 0 14.6Z" fill="url(#fBody)"/><path d="M.5 3.75H16.7" stroke="#b4e2ff" stroke-width=".55" opacity=".9"/><g transform="translate(0 .35)"><circle cx="8.6" cy="8.9" r="2.8" fill="#4690d6"/><path d="M8.6 7.4V10.2M7.5 9.2L8.6 10.3L9.7 9.2" stroke="#7cc0f4" stroke-width=".8" fill="none"/></g></svg><div class="t " style="top:520.90px;font-size:13.6px;line-height:15px;letter-spacing:0.084px;letter-spacing:0.084375000000001px;left:249.00px;color:#1e1e1e;">Downloads</div><svg class="ic" style="left:228.20px;top:542.88px" width="17.2" height="16.2" viewBox="0 0 17.2 16.2"><path d="M0 2Q0 .3 1.6 .3H5.4Q6.3 .3 6.9 .9L7.7 1.7Q8.1 2.1 8.9 2.1H15.7Q17.2 2.1 17.2 3.6V7H0Z" fill="url(#fTab)"/><path d="M0 4.5Q0 3.3 1.3 3.3H15.9Q17.2 3.3 17.2 4.5V14.6Q17.2 16.2 15.6 16.2H1.6Q0 16.2 0 14.6Z" fill="url(#fBody)"/><path d="M.5 3.75H16.7" stroke="#b4e2ff" stroke-width=".55" opacity=".9"/><g transform="translate(0 .35)"></g></svg><div class="t " style="top:542.43px;font-size:13.6px;line-height:15px;letter-spacing:0.282px;letter-spacing:0.28175951086956397px;left:249.00px;color:#1e1e1e;">downloadtemp</div><svg class="ic" style="left:228.20px;top:564.41px" width="17.2" height="16.2" viewBox="0 0 17.2 16.2"><path d="M0 2Q0 .3 1.6 .3H5.4Q6.3 .3 6.9 .9L7.7 1.7Q8.1 2.1 8.9 2.1H15.7Q17.2 2.1 17.2 3.6V7H0Z" fill="url(#fTab)"/><path d="M0 4.5Q0 3.3 1.3 3.3H15.9Q17.2 3.3 17.2 4.5V14.6Q17.2 16.2 15.6 16.2H1.6Q0 16.2 0 14.6Z" fill="url(#fBody)"/><path d="M.5 3.75H16.7" stroke="#b4e2ff" stroke-width=".55" opacity=".9"/><g transform="translate(0 .35)"></g></svg><div class="t " style="top:563.96px;font-size:13.6px;line-height:15px;letter-spacing:-0.032px;letter-spacing:-0.03208912037036974px;left:249.00px;color:#1e1e1e;">DSLR Assistant</div><svg class="ic" style="left:212.30px;top:586.59px" width="8" height="12" viewBox="0 0 8 12"><path d="M1.7 1.3L6.3 6L1.7 10.7" fill="none" stroke="#4d4d4d" stroke-width="1.55" stroke-linecap="round" stroke-linejoin="round"/></svg><svg class="ic" style="left:228.20px;top:585.94px" width="17.2" height="16.2" viewBox="0 0 17.2 16.2"><path d="M0 2Q0 .3 1.6 .3H5.4Q6.3 .3 6.9 .9L7.7 1.7Q8.1 2.1 8.9 2.1H15.7Q17.2 2.1 17.2 3.6V7H0Z" fill="url(#fTab)"/><path d="M0 4.5Q0 3.3 1.3 3.3H15.9Q17.2 3.3 17.2 4.5V14.6Q17.2 16.2 15.6 16.2H1.6Q0 16.2 0 14.6Z" fill="url(#fBody)"/><path d="M.5 3.75H16.7" stroke="#b4e2ff" stroke-width=".55" opacity=".9"/><g transform="translate(0 .35)"></g></svg><div class="t " style="top:585.49px;font-size:13.6px;line-height:15px;letter-spacing:0.136px;letter-spacing:0.13616071428571225px;left:249.00px;color:#1e1e1e;">File Juicer</div><svg class="ic" style="left:212.30px;top:608.12px" width="8" height="12" viewBox="0 0 8 12"><path d="M1.7 1.3L6.3 6L1.7 10.7" fill="none" stroke="#4d4d4d" stroke-width="1.55" stroke-linecap="round" stroke-linejoin="round"/></svg><svg class="ic" style="left:228.20px;top:607.47px" width="17.2" height="16.2" viewBox="0 0 17.2 16.2"><path d="M0 2Q0 .3 1.6 .3H5.4Q6.3 .3 6.9 .9L7.7 1.7Q8.1 2.1 8.9 2.1H15.7Q17.2 2.1 17.2 3.6V7H0Z" fill="url(#fTab)"/><path d="M0 4.5Q0 3.3 1.3 3.3H15.9Q17.2 3.3 17.2 4.5V14.6Q17.2 16.2 15.6 16.2H1.6Q0 16.2 0 14.6Z" fill="url(#fBody)"/><path d="M.5 3.75H16.7" stroke="#b4e2ff" stroke-width=".55" opacity=".9"/><g transform="translate(0 .35)"></g></svg><div class="t " style="top:607.02px;font-size:13.6px;line-height:15px;letter-spacing:0.203px;letter-spacing:0.20307459677419337px;left:249.00px;color:#1e1e1e;">FoundryLicensing</div><svg class="ic" style="left:212.30px;top:629.65px" width="8" height="12" viewBox="0 0 8 12"><path d="M1.7 1.3L6.3 6L1.7 10.7" fill="none" stroke="#4d4d4d" stroke-width="1.55" stroke-linecap="round" stroke-linejoin="round"/></svg><svg class="ic" style="left:228.20px;top:629.00px" width="17.2" height="16.2" viewBox="0 0 17.2 16.2"><path d="M0 2Q0 .3 1.6 .3H5.4Q6.3 .3 6.9 .9L7.7 1.7Q8.1 2.1 8.9 2.1H15.7Q17.2 2.1 17.2 3.6V7H0Z" fill="url(#fTab)"/><path d="M0 4.5Q0 3.3 1.3 3.3H15.9Q17.2 3.3 17.2 4.5V14.6Q17.2 16.2 15.6 16.2H1.6Q0 16.2 0 14.6Z" fill="url(#fBody)"/><path d="M.5 3.75H16.7" stroke="#b4e2ff" stroke-width=".55" opacity=".9"/><g transform="translate(0 .35)"></g></svg><div class="t " style="top:628.55px;font-size:13.6px;line-height:15px;letter-spacing:0.135px;letter-spacing:0.13466435185185333px;left:249.00px;color:#1e1e1e;">GolandProjects</div><svg class="ic" style="left:212.30px;top:651.18px" width="8" height="12" viewBox="0 0 8 12"><path d="M1.7 1.3L6.3 6L1.7 10.7" fill="none" stroke="#4d4d4d" stroke-width="1.55" stroke-linecap="round" stroke-linejoin="round"/></svg><svg class="ic" style="left:228.20px;top:650.53px" width="17.2" height="16.2" viewBox="0 0 17.2 16.2"><path d="M0 2Q0 .3 1.6 .3H5.4Q6.3 .3 6.9 .9L7.7 1.7Q8.1 2.1 8.9 2.1H15.7Q17.2 2.1 17.2 3.6V7H0Z" fill="url(#fTab)"/><path d="M0 4.5Q0 3.3 1.3 3.3H15.9Q17.2 3.3 17.2 4.5V14.6Q17.2 16.2 15.6 16.2H1.6Q0 16.2 0 14.6Z" fill="url(#fBody)"/><path d="M.5 3.75H16.7" stroke="#b4e2ff" stroke-width=".55" opacity=".9"/><g transform="translate(0 .35)"></g></svg><div class="t " style="top:650.08px;font-size:13.6px;line-height:15px;letter-spacing:0.254px;letter-spacing:0.25406249999999886px;left:249.00px;color:#1e1e1e;">hosts_backups</div><svg class="ic" style="left:228.20px;top:672.06px" width="17.2" height="16.2" viewBox="0 0 17.2 16.2"><path d="M0 2Q0 .3 1.6 .3H5.4Q6.3 .3 6.9 .9L7.7 1.7Q8.1 2.1 8.9 2.1H15.7Q17.2 2.1 17.2 3.6V7H0Z" fill="url(#fTab)"/><path d="M0 4.5Q0 3.3 1.3 3.3H15.9Q17.2 3.3 17.2 4.5V14.6Q17.2 16.2 15.6 16.2H1.6Q0 16.2 0 14.6Z" fill="url(#fBody)"/><path d="M.5 3.75H16.7" stroke="#b4e2ff" stroke-width=".55" opacity=".9"/><g transform="translate(0 .35)"></g></svg><div class="t " style="top:671.61px;font-size:13.6px;line-height:15px;letter-spacing:0.085px;letter-spacing:0.08494791666666718px;left:249.00px;color:#1e1e1e;">IACPLHttp...nsferClient</div><svg class="ic" style="left:212.30px;top:694.24px" width="8" height="12" viewBox="0 0 8 12"><path d="M1.7 1.3L6.3 6L1.7 10.7" fill="none" stroke="#4d4d4d" stroke-width="1.55" stroke-linecap="round" stroke-linejoin="round"/></svg><svg class="ic" style="left:228.20px;top:693.59px" width="17.2" height="16.2" viewBox="0 0 17.2 16.2"><path d="M0 2Q0 .3 1.6 .3H5.4Q6.3 .3 6.9 .9L7.7 1.7Q8.1 2.1 8.9 2.1H15.7Q17.2 2.1 17.2 3.6V7H0Z" fill="url(#fTab)"/><path d="M0 4.5Q0 3.3 1.3 3.3H15.9Q17.2 3.3 17.2 4.5V14.6Q17.2 16.2 15.6 16.2H1.6Q0 16.2 0 14.6Z" fill="url(#fBody)"/><path d="M.5 3.75H16.7" stroke="#b4e2ff" stroke-width=".55" opacity=".9"/><g transform="translate(0 .35)"></g></svg><div class="t " style="top:693.14px;font-size:13.6px;line-height:15px;letter-spacing:0.131px;letter-spacing:0.13070652173913266px;left:249.00px;color:#1e1e1e;">IdeaProjects</div><svg class="ic" style="left:228.20px;top:715.12px" width="17.2" height="16.2" viewBox="0 0 17.2 16.2"><path d="M0 2Q0 .3 1.6 .3H5.4Q6.3 .3 6.9 .9L7.7 1.7Q8.1 2.1 8.9 2.1H15.7Q17.2 2.1 17.2 3.6V7H0Z" fill="url(#fTab)"/><path d="M0 4.5Q0 3.3 1.3 3.3H15.9Q17.2 3.3 17.2 4.5V14.6Q17.2 16.2 15.6 16.2H1.6Q0 16.2 0 14.6Z" fill="url(#fBody)"/><path d="M.5 3.75H16.7" stroke="#b4e2ff" stroke-width=".55" opacity=".9"/><g transform="translate(0 .35)"></g></svg><div class="t " style="top:714.67px;font-size:13.6px;line-height:15px;letter-spacing:0.011px;letter-spacing:0.010653409090905215px;left:249.00px;color:#1e1e1e;">images</div><svg class="ic" style="left:212.30px;top:737.30px" width="8" height="12" viewBox="0 0 8 12"><path d="M1.7 1.3L6.3 6L1.7 10.7" fill="none" stroke="#4d4d4d" stroke-width="1.55" stroke-linecap="round" stroke-linejoin="round"/></svg><svg class="ic" style="left:228.20px;top:736.65px" width="17.2" height="16.2" viewBox="0 0 17.2 16.2"><path d="M0 2Q0 .3 1.6 .3H5.4Q6.3 .3 6.9 .9L7.7 1.7Q8.1 2.1 8.9 2.1H15.7Q17.2 2.1 17.2 3.6V7H0Z" fill="url(#fTab)"/><path d="M0 4.5Q0 3.3 1.3 3.3H15.9Q17.2 3.3 17.2 4.5V14.6Q17.2 16.2 15.6 16.2H1.6Q0 16.2 0 14.6Z" fill="url(#fBody)"/><path d="M.5 3.75H16.7" stroke="#b4e2ff" stroke-width=".55" opacity=".9"/><g transform="translate(0 .35)"><path d="M5.5 7.6L8.6 6.2L11.7 7.6ZM6.2 8.2V10.6M7.8 8.2V10.6M9.4 8.2V10.6M11 8.2V10.6M5.5 11.2H11.7" stroke="#4690d6" stroke-width=".8" fill="none"/></g></svg><div class="t " style="top:736.20px;font-size:13.6px;line-height:15px;letter-spacing:0.220px;letter-spacing:0.21995192307692307px;left:249.00px;color:#1e1e1e;">Library</div><svg class="ic" style="left:228.20px;top:758.18px" width="17.2" height="16.2" viewBox="0 0 17.2 16.2"><path d="M0 2Q0 .3 1.6 .3H5.4Q6.3 .3 6.9 .9L7.7 1.7Q8.1 2.1 8.9 2.1H15.7Q17.2 2.1 17.2 3.6V7H0Z" fill="url(#fTab)"/><path d="M0 4.5Q0 3.3 1.3 3.3H15.9Q17.2 3.3 17.2 4.5V14.6Q17.2 16.2 15.6 16.2H1.6Q0 16.2 0 14.6Z" fill="url(#fBody)"/><path d="M.5 3.75H16.7" stroke="#b4e2ff" stroke-width=".55" opacity=".9"/><g transform="translate(0 .35)"></g></svg><div class="t " style="top:757.73px;font-size:13.6px;line-height:15px;letter-spacing:0.100px;letter-spacing:0.10046874999999175px;left:249.00px;color:#1e1e1e;">log</div><svg class="ic" style="left:212.30px;top:780.36px" width="8" height="12" viewBox="0 0 8 12"><path d="M1.7 1.3L6.3 6L1.7 10.7" fill="none" stroke="#4d4d4d" stroke-width="1.55" stroke-linecap="round" stroke-linejoin="round"/></svg><svg class="ic" style="left:228.20px;top:779.71px" width="17.2" height="16.2" viewBox="0 0 17.2 16.2"><path d="M0 2Q0 .3 1.6 .3H5.4Q6.3 .3 6.9 .9L7.7 1.7Q8.1 2.1 8.9 2.1H15.7Q17.2 2.1 17.2 3.6V7H0Z" fill="url(#fTab)"/><path d="M0 4.5Q0 3.3 1.3 3.3H15.9Q17.2 3.3 17.2 4.5V14.6Q17.2 16.2 15.6 16.2H1.6Q0 16.2 0 14.6Z" fill="url(#fBody)"/><path d="M.5 3.75H16.7" stroke="#b4e2ff" stroke-width=".55" opacity=".9"/><g transform="translate(0 .35)"><rect x="5.2" y="6.2" width="6.8" height="5.2" rx=".5" fill="none" stroke="#4690d6" stroke-width=".9"/><path d="M6.6 6.2V11.4M10.6 6.2V11.4M6.6 8.8H10.6" stroke="#4690d6" stroke-width=".7"/></g></svg><div class="t " style="top:779.26px;font-size:13.6px;line-height:15px;letter-spacing:0.059px;letter-spacing:0.05859374999999612px;left:249.00px;color:#1e1e1e;">Movies</div><svg class="ic" style="left:212.30px;top:801.89px" width="8" height="12" viewBox="0 0 8 12"><path d="M1.7 1.3L6.3 6L1.7 10.7" fill="none" stroke="#4d4d4d" stroke-width="1.55" stroke-linecap="round" stroke-linejoin="round"/></svg><svg class="ic" style="left:228.20px;top:801.24px" width="17.2" height="16.2" viewBox="0 0 17.2 16.2"><path d="M0 2Q0 .3 1.6 .3H5.4Q6.3 .3 6.9 .9L7.7 1.7Q8.1 2.1 8.9 2.1H15.7Q17.2 2.1 17.2 3.6V7H0Z" fill="url(#fTab)"/><path d="M0 4.5Q0 3.3 1.3 3.3H15.9Q17.2 3.3 17.2 4.5V14.6Q17.2 16.2 15.6 16.2H1.6Q0 16.2 0 14.6Z" fill="url(#fBody)"/><path d="M.5 3.75H16.7" stroke="#b4e2ff" stroke-width=".55" opacity=".9"/><g transform="translate(0 .35)"><path d="M7.4 10.4V6.8L10.6 6.2V9.8" stroke="#4690d6" stroke-width=".9" fill="none"/><circle cx="6.8" cy="10.5" r=".9" fill="#4690d6"/><circle cx="10" cy="9.9" r=".9" fill="#4690d6"/></g></svg><div class="t " style="top:800.79px;font-size:13.6px;line-height:15px;letter-spacing:0.197px;letter-spacing:0.19687499999999464px;left:249.00px;color:#1e1e1e;">Music</div><svg class="ic" style="left:212.30px;top:823.42px" width="8" height="12" viewBox="0 0 8 12"><path d="M1.7 1.3L6.3 6L1.7 10.7" fill="none" stroke="#4d4d4d" stroke-width="1.55" stroke-linecap="round" stroke-linejoin="round"/></svg><svg class="ic" style="left:228.20px;top:822.77px" width="17.2" height="16.2" viewBox="0 0 17.2 16.2"><path d="M0 2Q0 .3 1.6 .3H5.4Q6.3 .3 6.9 .9L7.7 1.7Q8.1 2.1 8.9 2.1H15.7Q17.2 2.1 17.2 3.6V7H0Z" fill="url(#fTab)"/><path d="M0 4.5Q0 3.3 1.3 3.3H15.9Q17.2 3.3 17.2 4.5V14.6Q17.2 16.2 15.6 16.2H1.6Q0 16.2 0 14.6Z" fill="url(#fBody)"/><path d="M.5 3.75H16.7" stroke="#b4e2ff" stroke-width=".55" opacity=".9"/><g transform="translate(0 .35)"></g></svg><div class="t " style="top:822.32px;font-size:13.6px;line-height:15px;letter-spacing:-0.034px;letter-spacing:-0.03448660714285471px;left:249.00px;color:#1e1e1e;">My WangWang</div><svg class="ic" style="left:212.30px;top:844.95px" width="8" height="12" viewBox="0 0 8 12"><path d="M1.7 1.3L6.3 6L1.7 10.7" fill="none" stroke="#4d4d4d" stroke-width="1.55" stroke-linecap="round" stroke-linejoin="round"/></svg><svg class="ic" style="left:228.20px;top:842.85px" width="17.2" height="17.2" viewBox="0 0 17.2 17.2"><rect x=".3" y=".3" width="16.6" height="16.6" rx="3.6" fill="#fbfbfb" stroke="#d8d8da" stroke-width=".5"/><circle cx="8.6" cy="8.6" r="5.2" fill="none" stroke="#b9b9bb" stroke-width="1.4"/><path d="M5 5L12.2 12.2" stroke="#b9b9bb" stroke-width="1.4"/></svg><div class="t " style="top:843.85px;font-size:13.6px;line-height:15px;letter-spacing:0.118px;letter-spacing:0.11801470588235428px;left:249.00px;color:#1e1e1e;">MyApp.app</div><svg class="ic" style="left:228.20px;top:865.83px" width="17.2" height="16.2" viewBox="0 0 17.2 16.2"><path d="M0 2Q0 .3 1.6 .3H5.4Q6.3 .3 6.9 .9L7.7 1.7Q8.1 2.1 8.9 2.1H15.7Q17.2 2.1 17.2 3.6V7H0Z" fill="url(#fTab)"/><path d="M0 4.5Q0 3.3 1.3 3.3H15.9Q17.2 3.3 17.2 4.5V14.6Q17.2 16.2 15.6 16.2H1.6Q0 16.2 0 14.6Z" fill="url(#fBody)"/><path d="M.5 3.75H16.7" stroke="#b4e2ff" stroke-width=".55" opacity=".9"/><g transform="translate(0 .35)"></g></svg><div class="t " style="top:865.38px;font-size:13.6px;line-height:15px;letter-spacing:-0.192px;letter-spacing:-0.19174107142856758px;left:249.00px;color:#1e1e1e;">Oray</div><svg class="ic" style="left:212.30px;top:888.01px" width="8" height="12" viewBox="0 0 8 12"><path d="M1.7 1.3L6.3 6L1.7 10.7" fill="none" stroke="#4d4d4d" stroke-width="1.55" stroke-linecap="round" stroke-linejoin="round"/></svg><svg class="ic" style="left:228.20px;top:887.36px" width="17.2" height="16.2" viewBox="0 0 17.2 16.2"><path d="M0 2Q0 .3 1.6 .3H5.4Q6.3 .3 6.9 .9L7.7 1.7Q8.1 2.1 8.9 2.1H15.7Q17.2 2.1 17.2 3.6V7H0Z" fill="url(#fTab)"/><path d="M0 4.5Q0 3.3 1.3 3.3H15.9Q17.2 3.3 17.2 4.5V14.6Q17.2 16.2 15.6 16.2H1.6Q0 16.2 0 14.6Z" fill="url(#fBody)"/><path d="M.5 3.75H16.7" stroke="#b4e2ff" stroke-width=".55" opacity=".9"/><g transform="translate(0 .35)"></g></svg><div class="t " style="top:886.91px;font-size:13.6px;line-height:15px;letter-spacing:0.256px;letter-spacing:0.25640120967742064px;left:249.00px;color:#1e1e1e;">PhpstormProjects</div></div></div><div class="" style="position:absolute;left:147.30px;top:904.60px;width:274.70px;height:22.00px;background:#f7f7f7;border-top:1px solid #bdbdbd;border-bottom:1px solid #bdbdbd;box-sizing:border-box;"></div><div class="" style="position:absolute;left:168.60px;top:905.00px;width:1.10px;height:21.00px;background:#b9b9b9;"></div><div class="" style="position:absolute;left:191.40px;top:905.00px;width:1.10px;height:21.00px;background:#b9b9b9;"></div><div class="" style="position:absolute;left:319.40px;top:905.00px;width:1.00px;height:21.00px;background:#bdbdbd;"></div><div class="" style="position:absolute;left:421.20px;top:905.00px;width:1.00px;height:21.00px;background:#bdbdbd;"></div><svg class="ic" style="left:154px;top:910px" width="7.6" height="12" viewBox="0 0 7.6 12"><path d="M.2 .3H7.4V11.8L3.8 8.7L.2 11.8Z" fill="#38383a"/><path d="M.8 2.4H6.8" stroke="#5a5a5c" stroke-width=".6"/></svg><svg class="ic" style="left:173px;top:907.2px" width="15.6" height="16.4" viewBox="0 0 15.6 16.4"><defs><linearGradient id="fdL" x1="0" y1="0" x2="0" y2="1"><stop offset="0" stop-color="#7c7c7c"/><stop offset="1" stop-color="#3e3e3e"/></linearGradient><linearGradient id="fdR" x1="0" y1="0" x2="0" y2="1"><stop offset="0" stop-color="#e6e6e6"/><stop offset="1" stop-color="#b4b4b4"/></linearGradient></defs><rect x=".2" y="1.9" width="15.2" height="12.9" rx="1.6" fill="url(#fdR)"/><path d="M1.8 1.9H9.6Q7.4 5.4 7.6 9.2H9.6Q9.4 12.6 10.4 14.8H1.8Q.2 14.8 .2 13.2V3.5Q.2 1.9 1.8 1.9Z" fill="url(#fdL)"/><path d="M10.2 .4Q7.4 5 7.6 9.2H9.6Q9.4 13.2 10.8 16" fill="none" stroke="#333" stroke-width=".8"/><path d="M4.4 5V6.8M11.6 5V6.8" stroke="#3a3a3a" stroke-width=".9" stroke-linecap="round"/><path d="M3.4 10.6Q7.4 13.4 12.4 10.6" fill="none" stroke="#2e2e2e" stroke-width=".8"/></svg><div class="t " style="top:908.60px;font-size:13.6px;line-height:15px;letter-spacing:0.055px;letter-spacing:0.05468750000000135px;left:333.80px;color:#1a1a1a;">Scan Folder</div><div class="" style="position:absolute;left:147.00px;top:926.40px;width:1394.00px;height:30.60px;background:linear-gradient(#ececec,#e6e6e6 40%,#d6d6d6);"></div><div class="" style="position:absolute;left:147.00px;top:926.20px;width:1394.00px;height:0.90px;background:#c9c9c9;"></div><div class="" style="position:absolute;left:158.20px;top:934.80px;width:13.40px;height:13.40px;background:#fff;border-radius:3.2px;box-shadow:0 0 0 .6px #c4c4c4, 0 .5px 1px rgba(0,0,0,.18);"></div><div class="t " style="top:934.60px;font-size:13.6px;line-height:15px;letter-spacing:0.157px;letter-spacing:0.15695043103448236px;left:177.40px;color:#1a1a1a;">Scan subfolders</div><div class="t " style="top:934.80px;font-size:13.6px;line-height:15px;letter-spacing:0.2px;right:171.60px;color:#1a1a1a;">14 items</div><div class="" style="position:absolute;left:429.20px;top:174.00px;width:855.00px;height:752.40px;background:#ffffff;"></div><div style="position:absolute;left:429.2px;top:174px;width:855.0px;height:752.4px;overflow:hidden"><div style="position:absolute;left:-429.2px;top:-174px;width:1700px;height:1096px"><div class="" style="position:absolute;left:429.20px;top:231.23px;width:855.00px;height:23.93px;background:#f4f4f4;"></div><div class="" style="position:absolute;left:429.20px;top:279.09px;width:855.00px;height:23.93px;background:#f4f4f4;"></div><div class="" style="position:absolute;left:429.20px;top:326.95px;width:855.00px;height:23.93px;background:#f4f4f4;"></div><div class="" style="position:absolute;left:429.20px;top:374.81px;width:855.00px;height:23.93px;background:#f4f4f4;"></div><div class="" style="position:absolute;left:429.20px;top:422.67px;width:855.00px;height:23.93px;background:#f4f4f4;"></div><div class="" style="position:absolute;left:429.20px;top:470.53px;width:855.00px;height:23.93px;background:#f4f4f4;"></div><div class="" style="position:absolute;left:429.20px;top:518.39px;width:855.00px;height:23.93px;background:#f4f4f4;"></div><div class="" style="position:absolute;left:429.20px;top:566.25px;width:855.00px;height:23.93px;background:#f4f4f4;"></div><div class="" style="position:absolute;left:429.20px;top:614.11px;width:855.00px;height:23.93px;background:#f4f4f4;"></div><div class="" style="position:absolute;left:429.20px;top:661.97px;width:855.00px;height:23.93px;background:#f4f4f4;"></div><div class="" style="position:absolute;left:429.20px;top:709.83px;width:855.00px;height:23.93px;background:#f4f4f4;"></div><div class="" style="position:absolute;left:429.20px;top:757.69px;width:855.00px;height:23.93px;background:#f4f4f4;"></div><div class="" style="position:absolute;left:429.20px;top:805.55px;width:855.00px;height:23.93px;background:#f4f4f4;"></div><div class="" style="position:absolute;left:429.20px;top:853.41px;width:855.00px;height:23.93px;background:#f4f4f4;"></div><div class="" style="position:absolute;left:429.20px;top:901.27px;width:855.00px;height:23.93px;background:#f4f4f4;"></div><div class="" style="position:absolute;left:429.20px;top:174.00px;width:855.00px;height:32.00px;background:#fdfdfd;"></div><div class="" style="position:absolute;left:429.20px;top:205.80px;width:855.00px;height:1.00px;background:#dadada;"></div><div class="" style="position:absolute;left:453.30px;top:180.80px;width:1.10px;height:20.40px;background:#e2e2e2;"></div><div class="" style="position:absolute;left:478.70px;top:180.80px;width:1.10px;height:20.40px;background:#e2e2e2;"></div><div class="" style="position:absolute;left:763.50px;top:180.80px;width:1.10px;height:20.40px;background:#e2e2e2;"></div><div class="" style="position:absolute;left:892.60px;top:180.80px;width:1.10px;height:20.40px;background:#e2e2e2;"></div><div class="" style="position:absolute;left:1029.00px;top:180.80px;width:1.10px;height:20.40px;background:#e2e2e2;"></div><div class="" style="position:absolute;left:1099.70px;top:180.80px;width:1.10px;height:20.40px;background:#e2e2e2;"></div><div class="" style="position:absolute;left:1186.90px;top:180.80px;width:1.10px;height:20.40px;background:#e2e2e2;"></div><div class="" style="position:absolute;left:1225.70px;top:180.80px;width:1.10px;height:20.40px;background:#e2e2e2;"></div><svg class="ic" style="left:434.8px;top:183.6px" width="11.2" height="10.9" viewBox="0 0 12 11.6"><path d="M6 .5Q6.5 .5 6.8 1L11.5 9.6Q12 10.9 10.8 11.1H1.2Q0 10.9 .5 9.6L5.2 1Q5.5 .5 6 .5Z" fill="#444"/><path d="M6 4V7.4" stroke="#fff" stroke-width="1.5" stroke-linecap="round"/><circle cx="6" cy="9.4" r=".85" fill="#fff"/></svg><div class="t " style="top:183.10px;font-size:13.6px;line-height:15px;letter-spacing:-0.222px;letter-spacing:-0.22220982142857185px;left:485.80px;color:#262626;">Name</div><div class="t " style="top:183.10px;font-size:13.6px;line-height:15px;letter-spacing:0.046px;letter-spacing:0.04566761363636312px;left:771.00px;color:#262626;">Folder</div><div class="t " style="top:183.10px;font-size:13.6px;line-height:15px;letter-spacing:-0.063px;letter-spacing:-0.06283482142857164px;left:900.10px;color:#262626;">Kind</div><div class="t " style="top:183.10px;font-size:13.6px;line-height:15px;letter-spacing:0.2px;right:607.10px;color:#262626;">Size</div><div class="t " style="top:183.10px;font-size:13.6px;line-height:15px;letter-spacing:0.084px;letter-spacing:0.08445723684210436px;left:1107.20px;color:#262626;">Color Mode</div><div class="t " style="top:183.10px;font-size:13.6px;line-height:15px;letter-spacing:-1.114px;letter-spacing:-1.1140625px;left:1194.40px;color:#262626;">Res</div><div class="t " style="top:183.10px;font-size:13.6px;line-height:15px;letter-spacing:0.116px;letter-spacing:0.11556490384615341px;left:1234.00px;color:#262626;">Profile</div><div class="" style="position:absolute;left:457.60px;top:209.90px;width:17.30px;height:19.10px;background:#fff;box-shadow:0 0 0 .7px #dcdcdc,0 1px 1.5px rgba(0,0,0,.18);"></div><div class="t " style="top:211.50px;font-size:13.6px;line-height:15px;letter-spacing:0.016px;letter-spacing:0.015909090909079025px;left:483.60px;color:#1c1c1c;">UC.png</div><div class="t " style="top:211.50px;font-size:13.6px;line-height:15px;letter-spacing:-0.334px;letter-spacing:-0.3337142857142855px;left:768.40px;color:#1c1c1c;"><span class="cj">应用玩客</span></div><div class="t " style="top:211.50px;font-size:13.6px;line-height:15px;letter-spacing:-0.769px;letter-spacing:-0.7692386111111157px;left:897.50px;color:#1c1c1c;">PNG<span class="cj" style="margin:0 0.00px 0 2.51px">图像</span></div><div class="t " style="top:211.50px;font-size:13.6px;line-height:15px;right:604.80px;color:#1c1c1c;">3 KB</div><div class="t " style="top:211.50px;font-size:13.6px;line-height:15px;letter-spacing:-1.148px;letter-spacing:-1.1484374999999987px;left:1104.60px;color:#1c1c1c;">RGB</div><div class="t " style="top:211.50px;font-size:13.6px;line-height:15px;right:478.20px;color:#1c1c1c;">144</div><svg class="ic" style="left:458.70px;top:233.73px" width="15" height="19.4" viewBox="0 0 15 19.4"><path d="M.4 .4H10L14.6 5V19H.4Z" fill="#f7f7f7" stroke="#e1e1e1" stroke-width=".6"/><path d="M.6 19.1H14.4" stroke="#d2d2d2" stroke-width=".6"/><path d="M10 .4V5H14.6" fill="#fff" stroke="#d6d6d6" stroke-width=".6"/><path d="M5 16.4H9.8" stroke="#9a9a9a" stroke-width="1" stroke-dasharray="1.3 .4"/></svg><div class="t " style="top:235.43px;font-size:13.6px;line-height:15px;letter-spacing:0.014px;letter-spacing:0.014468750000002046px;left:483.60px;color:#1c1c1c;">SecretKey.csv</div><div class="t " style="top:235.43px;font-size:13.6px;line-height:15px;letter-spacing:-0.334px;letter-spacing:-0.3337142857142855px;left:768.40px;color:#1c1c1c;"><span class="cj">应用玩客</span></div><div class="t " style="top:235.43px;font-size:13.6px;line-height:15px;letter-spacing:0.001px;letter-spacing:0.001071428571428409px;left:897.50px;color:#1c1c1c;">Comma Separated...</div><div class="t " style="top:235.43px;font-size:13.6px;line-height:15px;right:604.80px;color:#1c1c1c;">92 bytes</div><svg class="ic" style="left:457.60px;top:258.36px" width="17.4" height="17.2" viewBox="0 0 17.4 17.2"><rect width="17.4" height="17.2" fill="#1d4fe2"/><g fill="none" stroke="#fff" stroke-width="1.9"><circle cx="8.7" cy="6.2" r="2.9"/><circle cx="5.3" cy="11" r="2.9"/><circle cx="12.1" cy="11" r="2.9"/></g></svg><div class="t " style="top:259.36px;font-size:13.6px;line-height:15px;letter-spacing:0.017px;letter-spacing:0.01681875000000256px;left:483.60px;color:#1c1c1c;"><span class="cj">下载图标</span>.psd</div><div class="t " style="top:259.36px;font-size:13.6px;line-height:15px;letter-spacing:-0.334px;letter-spacing:-0.3337142857142855px;left:768.40px;color:#1c1c1c;"><span class="cj">应用玩客</span></div><div class="t " style="top:259.36px;font-size:13.6px;line-height:15px;letter-spacing:-0.825px;letter-spacing:-0.8254687500000089px;left:897.50px;color:#1c1c1c;">PSD</div><div class="t " style="top:259.36px;font-size:13.6px;line-height:15px;right:604.80px;color:#1c1c1c;">141 KB</div><div class="t " style="top:259.36px;font-size:13.6px;line-height:15px;letter-spacing:-1.148px;letter-spacing:-1.1484374999999987px;left:1104.60px;color:#1c1c1c;">RGB</div><div class="t " style="top:259.36px;font-size:13.6px;line-height:15px;right:478.20px;color:#1c1c1c;">144</div><div class="t " style="top:259.36px;font-size:13.6px;line-height:15px;letter-spacing:0.017px;letter-spacing:0.016646634615385052px;left:1231.40px;color:#1c1c1c;">Display</div><svg class="ic" style="left:458.70px;top:281.59px" width="15" height="19.4" viewBox="0 0 15 19.4"><path d="M.4 .4H10L14.6 5V19H.4Z" fill="#fcfcfc" stroke="#e1e1e1" stroke-width=".6"/><path d="M.6 19.1H14.4" stroke="#d2d2d2" stroke-width=".6"/><path d="M10 .4V5H14.6" fill="#fff" stroke="#d6d6d6" stroke-width=".6"/><g fill="none" stroke="#5c5aa6" stroke-width=".8" opacity=".9"><ellipse cx="7.2" cy="8.4" rx="3.1" ry="3.5"/><ellipse cx="7.6" cy="8.6" rx="1.5" ry="2.9"/><path d="M7.6 3.2V12.8M4.6 6.6Q7 9.2 10.4 6.2M5 10.2Q7.4 8 9.8 10.6"/></g><path d="M4.4 16.4H10.4" stroke="#a4a4a4" stroke-width="1" stroke-dasharray="1.1 .35"/></svg><div class="t " style="top:283.29px;font-size:13.6px;line-height:15px;letter-spacing:0.202px;letter-spacing:0.20205871212121193px;left:483.60px;color:#1c1c1c;">admin-page <span class="cj">备份</span>.css</div><div class="t " style="top:283.29px;font-size:13.6px;line-height:15px;letter-spacing:-0.334px;letter-spacing:-0.3337142857142855px;left:768.40px;color:#1c1c1c;"><span class="cj">应用玩客</span></div><div class="t " style="top:283.29px;font-size:13.6px;line-height:15px;letter-spacing:0.310px;letter-spacing:0.3099999999999966px;left:897.50px;color:#1c1c1c;">text document</div><div class="t " style="top:283.29px;font-size:13.6px;line-height:15px;right:604.80px;color:#1c1c1c;">5 KB</div><svg class="ic" style="left:458.70px;top:305.52px" width="15" height="19.4" viewBox="0 0 15 19.4"><path d="M.4 .4H10L14.6 5V19H.4Z" fill="#fcfcfc" stroke="#e1e1e1" stroke-width=".6"/><path d="M.6 19.1H14.4" stroke="#d2d2d2" stroke-width=".6"/><path d="M10 .4V5H14.6" fill="#fff" stroke="#d6d6d6" stroke-width=".6"/><g fill="none" stroke="#5c5aa6" stroke-width=".8" opacity=".9"><ellipse cx="7.2" cy="8.4" rx="3.1" ry="3.5"/><ellipse cx="7.6" cy="8.6" rx="1.5" ry="2.9"/><path d="M7.6 3.2V12.8M4.6 6.6Q7 9.2 10.4 6.2M5 10.2Q7.4 8 9.8 10.6"/></g><path d="M4.4 16.4H10.4" stroke="#a4a4a4" stroke-width="1" stroke-dasharray="1.1 .35"/></svg><div class="t " style="top:307.22px;font-size:13.6px;line-height:15px;letter-spacing:0.061px;letter-spacing:0.06128663793103328px;left:483.60px;color:#1c1c1c;">main.min <span class="cj">备份</span>.css</div><div class="t " style="top:307.22px;font-size:13.6px;line-height:15px;letter-spacing:-0.334px;letter-spacing:-0.3337142857142855px;left:768.40px;color:#1c1c1c;"><span class="cj">应用玩客</span></div><div class="t " style="top:307.22px;font-size:13.6px;line-height:15px;letter-spacing:0.310px;letter-spacing:0.3099999999999966px;left:897.50px;color:#1c1c1c;">text document</div><div class="t " style="top:307.22px;font-size:13.6px;line-height:15px;right:604.80px;color:#1c1c1c;">313 KB</div><svg class="ic" style="left:458.70px;top:329.45px" width="15" height="19.4" viewBox="0 0 15 19.4"><path d="M.4 .4H10L14.6 5V19H.4Z" fill="#fdfdfd" stroke="#e1e1e1" stroke-width=".6"/><path d="M.6 19.1H14.4" stroke="#d2d2d2" stroke-width=".6"/><path d="M10 .4V5H14.6" fill="#fff" stroke="#d6d6d6" stroke-width=".6"/><text x="7.2" y="12.6" text-anchor="middle" font-family="Liberation Sans, sans-serif" font-style="italic" font-size="9.6" fill="#37379a" stroke="#37379a" stroke-width=".3">@</text></svg><div class="t " style="top:331.15px;font-size:13.6px;line-height:15px;letter-spacing:0.060px;letter-spacing:0.06040456081080947px;left:483.60px;color:#1c1c1c;"><span class="cj">应用玩客</span> - <span class="cj">更多精品破解软件</span>.url</div><div class="t " style="top:331.15px;font-size:13.6px;line-height:15px;letter-spacing:-0.334px;letter-spacing:-0.3337142857142855px;left:768.40px;color:#1c1c1c;"><span class="cj">应用玩客</span></div><div class="t " style="top:331.15px;font-size:13.6px;line-height:15px;letter-spacing:-0.419px;letter-spacing:-0.41942857142858464px;left:897.50px;color:#1c1c1c;"><span class="cj">网站地址</span></div><div class="t " style="top:331.15px;font-size:13.6px;line-height:15px;right:604.80px;color:#1c1c1c;">49 bytes</div><svg class="ic" style="left:456.70px;top:353.98px" width="19" height="18.4" viewBox="0 0 19 18.4"><path d="M.4 .4H14.2L18.6 4.8V18H.4Z" fill="#e6e9ee" stroke="#d0d3d8" stroke-width=".6"/><path d="M14.2 .4V4.8H18.6" fill="#fafafa" stroke="#cfcfcf" stroke-width=".5"/><path d="M2 9.2V14.6" stroke="#333" stroke-width="1.1"/><path d="M10.4 2.8L14.4 4.2L13.6 7.4Z" fill="#222"/></svg><div class="t " style="top:355.08px;font-size:13.6px;line-height:15px;letter-spacing:-0.159px;letter-spacing:-0.15871874999999575px;left:483.60px;color:#1c1c1c;"><span class="cj">语雀视觉</span>.ai</div><div class="t " style="top:355.08px;font-size:13.6px;line-height:15px;letter-spacing:-0.334px;letter-spacing:-0.3337142857142855px;left:768.40px;color:#1c1c1c;"><span class="cj">应用玩客</span></div><div class="t " style="top:355.08px;font-size:13.6px;line-height:15px;letter-spacing:0.289px;letter-spacing:0.28886217948717946px;left:897.50px;color:#1c1c1c;">Adobe Illustrator...</div><div class="t " style="top:355.08px;font-size:13.6px;line-height:15px;right:604.80px;color:#1c1c1c;">2.6 MB</div><svg class="ic" style="left:456.70px;top:377.91px" width="19" height="18.4" viewBox="0 0 19 18.4"><path d="M.4 .4H14.2L18.6 4.8V18H.4Z" fill="#e6e9ee" stroke="#d0d3d8" stroke-width=".6"/><path d="M14.2 .4V4.8H18.6" fill="#fafafa" stroke="#cfcfcf" stroke-width=".5"/><path d="M2.6 6.4V13" stroke="#2b3f86" stroke-width="1.2"/><path d="M3.6 10.2H8.2M10.2 10.2H15.6" stroke="#2353e0" stroke-width="2.7"/><path d="M4 7.8H7.4M10.8 7.8H14.2" stroke="#a3b9ee" stroke-width="1"/></svg><div class="t " style="top:379.01px;font-size:13.6px;line-height:15px;letter-spacing:0.074px;letter-spacing:0.07390439655172297px;left:483.60px;color:#1c1c1c;"><span class="cj" style="margin:0 2.51px 0 0.00px">应用玩客</span>logo-new.ai</div><div class="t " style="top:379.01px;font-size:13.6px;line-height:15px;letter-spacing:-0.334px;letter-spacing:-0.3337142857142855px;left:768.40px;color:#1c1c1c;"><span class="cj">应用玩客</span></div><div class="t " style="top:379.01px;font-size:13.6px;line-height:15px;letter-spacing:0.289px;letter-spacing:0.28886217948717946px;left:897.50px;color:#1c1c1c;">Adobe Illustrator...</div><div class="t " style="top:379.01px;font-size:13.6px;line-height:15px;right:604.80px;color:#1c1c1c;">2.1 MB</div><svg class="ic" style="left:457.80px;top:400.84px" width="17" height="16.8" viewBox="0 0 17 16.8"><rect x=".3" y=".3" width="16.4" height="16.2" rx="3.6" fill="#382c22" stroke="#8f7f6a" stroke-width=".6"/><path d="M2.2 6.4Q3.4 3 7.2 2.6L10.4 4.6L8.6 9.6L6.6 14.4Q3.4 13.6 2.4 10.4Z" fill="#d6b042"/><path d="M8.8 4.2Q12.6 3.4 13.8 6.6L13.6 10.6Q12.4 13.8 9.6 14.2Q8 12 8.2 8.6Z" fill="#b98a62"/><path d="M10.6 9.4Q12.6 9.6 13.6 8.8L13.4 11.4Q12 13.4 10.2 13.2Z" fill="#5a3c2e"/><circle cx="11.4" cy="7.2" r=".8" fill="#2b1d17"/><rect x="1.6" y="2.6" width="2.4" height="2.2" rx=".4" fill="#2d55c6"/></svg><div class="t " style="top:402.94px;font-size:13.6px;line-height:15px;letter-spacing:-0.255px;letter-spacing:-0.2550028289473747px;left:483.60px;color:#1c1c1c;">PS<span class="cj" style="margin:0 0.00px 0 2.51px">插件合集</span>.psd</div><div class="t " style="top:402.94px;font-size:13.6px;line-height:15px;letter-spacing:-0.334px;letter-spacing:-0.3337142857142855px;left:768.40px;color:#1c1c1c;"><span class="cj">应用玩客</span></div><div class="t " style="top:402.94px;font-size:13.6px;line-height:15px;letter-spacing:-0.825px;letter-spacing:-0.8254687500000089px;left:897.50px;color:#1c1c1c;">PSD</div><div class="t " style="top:402.94px;font-size:13.6px;line-height:15px;right:604.80px;color:#1c1c1c;">2.3 MB</div><div class="t " style="top:402.94px;font-size:13.6px;line-height:15px;letter-spacing:-1.148px;letter-spacing:-1.1484374999999987px;left:1104.60px;color:#1c1c1c;">RGB</div><div class="t " style="top:402.94px;font-size:13.6px;line-height:15px;right:478.20px;color:#1c1c1c;">72</div><div class="t " style="top:402.94px;font-size:13.6px;line-height:15px;letter-spacing:-0.4px;left:1231.40px;color:#1c1c1c;">sRGB IEC61966-2.1</div><svg class="ic" style="left:456.10px;top:426.77px" width="20.4" height="15.6" viewBox="0 0 20.4 15.6"><rect width="20.4" height="15.6" fill="#f1f1f1"/><rect width="20.4" height="1.7" fill="#111"/><rect y="13.6" width="20.4" height="2" fill="#111"/><path d="M5 7.6H15.4" stroke="#c9c9c9" stroke-width=".8" stroke-dasharray="1.4 .8"/></svg><div class="t " style="top:426.87px;font-size:13.6px;line-height:15px;letter-spacing:0.282px;letter-spacing:0.2820673076923089px;left:483.60px;color:#1c1c1c;">01_creativity_for_all_445x239.mp4</div><div class="t " style="top:426.87px;font-size:13.6px;line-height:15px;letter-spacing:-0.334px;letter-spacing:-0.3337142857142855px;left:768.40px;color:#1c1c1c;"><span class="cj">应用玩客</span></div><div class="t " style="top:426.87px;font-size:13.6px;line-height:15px;letter-spacing:-0.271px;letter-spacing:-0.27102233333333176px;left:897.50px;color:#1c1c1c;">MPEG-4<span class="cj" style="margin:0 0.00px 0 2.51px">影片</span></div><div class="t " style="top:426.87px;font-size:13.6px;line-height:15px;right:604.80px;color:#1c1c1c;">891 KB</div><div class="" style="position:absolute;left:457.60px;top:449.20px;width:17.30px;height:19.10px;background:#fff;box-shadow:0 0 0 .7px #dcdcdc,0 1px 1.5px rgba(0,0,0,.18);"></div><div class="t " style="top:450.80px;font-size:13.6px;line-height:15px;letter-spacing:0.230px;letter-spacing:0.22991727941175685px;left:483.60px;color:#1c1c1c;">baidu.png</div><div class="t " style="top:450.80px;font-size:13.6px;line-height:15px;letter-spacing:-0.334px;letter-spacing:-0.3337142857142855px;left:768.40px;color:#1c1c1c;"><span class="cj">应用玩客</span></div><div class="t " style="top:450.80px;font-size:13.6px;line-height:15px;letter-spacing:-0.769px;letter-spacing:-0.7692386111111157px;left:897.50px;color:#1c1c1c;">PNG<span class="cj" style="margin:0 0.00px 0 2.51px">图像</span></div><div class="t " style="top:450.80px;font-size:13.6px;line-height:15px;right:604.80px;color:#1c1c1c;">2 KB</div><div class="t " style="top:450.80px;font-size:13.6px;line-height:15px;letter-spacing:-1.148px;letter-spacing:-1.1484374999999987px;left:1104.60px;color:#1c1c1c;">RGB</div><div class="t " style="top:450.80px;font-size:13.6px;line-height:15px;right:478.20px;color:#1c1c1c;">144</div><svg class="ic" style="left:457.80px;top:472.63px" width="17" height="16.8" viewBox="0 0 17 16.8"><rect x=".3" y=".3" width="16.4" height="16.2" rx="3.6" fill="#382c22" stroke="#8f7f6a" stroke-width=".6"/><path d="M2.2 6.4Q3.4 3 7.2 2.6L10.4 4.6L8.6 9.6L6.6 14.4Q3.4 13.6 2.4 10.4Z" fill="#d6b042"/><path d="M8.8 4.2Q12.6 3.4 13.8 6.6L13.6 10.6Q12.4 13.8 9.6 14.2Q8 12 8.2 8.6Z" fill="#b98a62"/><path d="M10.6 9.4Q12.6 9.6 13.6 8.8L13.4 11.4Q12 13.4 10.2 13.2Z" fill="#5a3c2e"/><circle cx="11.4" cy="7.2" r=".8" fill="#2b1d17"/><rect x="1.6" y="2.6" width="2.4" height="2.2" rx=".4" fill="#2d55c6"/></svg><div class="t " style="top:474.73px;font-size:13.6px;line-height:15px;letter-spacing:-0.199px;letter-spacing:-0.19854723684210435px;left:483.60px;color:#1c1c1c;">PS<span class="cj" style="margin:0 0.00px 0 2.51px">插件合集</span>.png</div><div class="t " style="top:474.73px;font-size:13.6px;line-height:15px;letter-spacing:-0.334px;letter-spacing:-0.3337142857142855px;left:768.40px;color:#1c1c1c;"><span class="cj">应用玩客</span></div><div class="t " style="top:474.73px;font-size:13.6px;line-height:15px;letter-spacing:-0.769px;letter-spacing:-0.7692386111111157px;left:897.50px;color:#1c1c1c;">PNG<span class="cj" style="margin:0 0.00px 0 2.51px">图像</span></div><div class="t " style="top:474.73px;font-size:13.6px;line-height:15px;right:604.80px;color:#1c1c1c;">348 KB</div><div class="t " style="top:474.73px;font-size:13.6px;line-height:15px;letter-spacing:-1.148px;letter-spacing:-1.1484374999999987px;left:1104.60px;color:#1c1c1c;">RGB</div><div class="t " style="top:474.73px;font-size:13.6px;line-height:15px;right:478.20px;color:#1c1c1c;">72</div><div class="t " style="top:474.73px;font-size:13.6px;line-height:15px;letter-spacing:-0.4px;left:1231.40px;color:#1c1c1c;">sRGB IEC61966-2.1</div><svg class="ic" style="left:456.70px;top:497.56px" width="19" height="18.4" viewBox="0 0 19 18.4"><path d="M.4 .4H14.2L18.6 4.8V18H.4Z" fill="#e6e9ee" stroke="#d0d3d8" stroke-width=".6"/><path d="M14.2 .4V4.8H18.6" fill="#fafafa" stroke="#cfcfcf" stroke-width=".5"/><path d="M2.6 6.4V13" stroke="#2b3f86" stroke-width="1.2"/><path d="M3.6 10.2H8.2M10.2 10.2H15.6" stroke="#2353e0" stroke-width="2.7"/><path d="M4 7.8H7.4M10.8 7.8H14.2" stroke="#a3b9ee" stroke-width="1"/></svg><div class="t " style="top:498.66px;font-size:13.6px;line-height:15px;letter-spacing:0.069px;letter-spacing:0.0693660648148106px;left:483.60px;color:#1c1c1c;"><span class="cj" style="margin:0 2.51px 0 0.00px">应用玩客</span>logo-<span class="cj">终稿</span>.ai</div><div class="t " style="top:498.66px;font-size:13.6px;line-height:15px;letter-spacing:-0.334px;letter-spacing:-0.3337142857142855px;left:768.40px;color:#1c1c1c;"><span class="cj">应用玩客</span></div><div class="t " style="top:498.66px;font-size:13.6px;line-height:15px;letter-spacing:0.289px;letter-spacing:0.28886217948717946px;left:897.50px;color:#1c1c1c;">Adobe Illustrator...</div><div class="t " style="top:498.66px;font-size:13.6px;line-height:15px;right:604.80px;color:#1c1c1c;">3.8 MB</div><svg class="ic" style="left:456.70px;top:521.49px" width="19" height="18.4" viewBox="0 0 19 18.4"><path d="M.4 .4H14.2L18.6 4.8V18H.4Z" fill="#e6e9ee" stroke="#d0d3d8" stroke-width=".6"/><path d="M14.2 .4V4.8H18.6" fill="#fafafa" stroke="#cfcfcf" stroke-width=".5"/><path d="M2.6 6V13.4" stroke="#2b3f86" stroke-width="1.2"/><path d="M3.8 9.6H7.8" stroke="#2353e0" stroke-width="3"/><path d="M4 12.4H7.4" stroke="#8fa8e6" stroke-width="1.2"/><path d="M9.6 6.4H14.8M10 8.8H13.8M9.6 11.2H14.8M10.6 13.4H13.6" stroke="#a9bce8" stroke-width="1"/></svg><div class="t " style="top:522.59px;font-size:13.6px;line-height:15px;letter-spacing:-0.043px;letter-spacing:-0.04291922619047807px;left:483.60px;color:#1c1c1c;"><span class="cj" style="margin:0 2.51px 0 0.00px">应用玩客</span>logo.ai</div><div class="t " style="top:522.59px;font-size:13.6px;line-height:15px;letter-spacing:-0.334px;letter-spacing:-0.3337142857142855px;left:768.40px;color:#1c1c1c;"><span class="cj">应用玩客</span></div><div class="t " style="top:522.59px;font-size:13.6px;line-height:15px;letter-spacing:0.289px;letter-spacing:0.28886217948717946px;left:897.50px;color:#1c1c1c;">Adobe Illustrator...</div><div class="t " style="top:522.59px;font-size:13.6px;line-height:15px;right:604.80px;color:#1c1c1c;">666 KB</div></div></div><div class="" style="position:absolute;left:1284.20px;top:174.00px;width:5.80px;height:752.40px;background:linear-gradient(90deg,#e2e2e2,#ececec 25%,#e6e6e6 50%,#d3d3d3 78%,#dcdcdc 92%,#ebebeb);"></div><div class="" style="position:absolute;left:1287.30px;top:539.00px;width:1.00px;height:23.00px;background:#a8a8a8;"></div><div class="" style="position:absolute;left:1289.30px;top:539.00px;width:0.80px;height:23.00px;background:#bdbdbd;"></div><div class="" style="position:absolute;left:1289.80px;top:173.60px;width:251.20px;height:752.80px;background:#ebebeb;"></div><div class="" style="position:absolute;left:1291.20px;top:173.60px;width:249.80px;height:236.20px;background:#4b4b4b;"></div><div class="" style="position:absolute;left:1291.20px;top:409.80px;width:249.80px;height:7.20px;background:#f4f4f4;"></div><div class="" style="position:absolute;left:1291.20px;top:409.80px;width:249.80px;height:0.80px;background:#d0d0d0;"></div><div class="" style="position:absolute;left:1404.00px;top:412.00px;width:23.60px;height:0.80px;background:#b4b4b4;"></div><div class="" style="position:absolute;left:1404.00px;top:414.20px;width:23.60px;height:0.80px;background:#b4b4b4;"></div><div class="" style="position:absolute;left:1291.20px;top:417.00px;width:249.80px;height:21.40px;background:#f8f8f8;border-top:1px solid #c2c2c2;border-bottom:1px solid #b6b6b6;box-sizing:border-box;"></div><div class="" style="position:absolute;left:1291.80px;top:417.00px;width:107.60px;height:21.40px;background:#676767;"></div><div class="" style="position:absolute;left:1399.40px;top:417.00px;width:0.90px;height:21.00px;background:#8e8e8e;"></div><div class="" style="position:absolute;left:1502.60px;top:417.60px;width:1.00px;height:20.40px;background:#b9b9b9;"></div><div class="t " style="top:421.80px;font-size:13.6px;line-height:15px;letter-spacing:0.233px;letter-spacing:0.23303571428571448px;left:1334.50px;color:#fff;-webkit-text-stroke:.35px #fff;">Info</div><div class="t " style="top:421.80px;font-size:13.6px;line-height:15px;letter-spacing:0.159px;letter-spacing:0.15942708333333352px;left:1422.20px;color:#1a1a1a;">Metadata</div><div class="t " style="top:458.00px;font-size:13.6px;line-height:15px;letter-spacing:-0.124px;letter-spacing:-0.1236111111111108px;left:1303.70px;color:#1a1a1a;">Name:</div><div class="t " style="top:477.30px;font-size:13.6px;line-height:15px;letter-spacing:0.2px;left:1303.70px;color:#1a1a1a;">Path:</div><div class="t " style="top:497.50px;font-size:13.6px;line-height:15px;letter-spacing:0.2px;left:1303.70px;color:#1a1a1a;">App:</div><div class="t " style="top:518.40px;font-size:13.6px;line-height:15px;letter-spacing:0.260px;letter-spacing:0.2600405092592595px;left:1303.70px;color:#1a1a1a;">Date Modified:</div><div class="t " style="top:539.80px;font-size:13.6px;line-height:15px;letter-spacing:0.131px;letter-spacing:0.13056249999999978px;left:1303.70px;color:#1a1a1a;">Date Created:</div><div class="t " style="top:541.00px;font-size:13.6px;line-height:15px;letter-spacing:0.037px;letter-spacing:0.037276785714286324px;left:1410.40px;color:#b4b4b4;">date</div><div class="" style="position:absolute;left:1303.70px;top:574.70px;width:60.70px;height:18.60px;background:#ededed;border:1px solid #cdcdcd;box-sizing:border-box;"></div><div class="" style="position:absolute;left:1371.70px;top:574.70px;width:113.50px;height:18.60px;background:#ededed;border:1px solid #cdcdcd;box-sizing:border-box;"></div><div class="t " style="top:578.00px;font-size:11.6px;line-height:13px;letter-spacing:-0.222px;letter-spacing:-0.22198660714285673px;left:1320.00px;color:#b2b2b2;">Open</div><div class="t " style="top:578.00px;font-size:11.6px;line-height:13px;letter-spacing:-0.094px;letter-spacing:-0.09435483870967687px;left:1386.50px;color:#b2b2b2;">Reveal in Finder</div><div class="t " style="top:620.00px;font-size:13.6px;line-height:15px;letter-spacing:0.170px;letter-spacing:0.1702414772727278px;left:1318.50px;color:#1a1a1a;">Alerts</div><div class="" style="position:absolute;left:1303.70px;top:635.60px;width:223.30px;height:277.40px;background:#e2e2e2;border-radius:5px;box-shadow:0 0 0 .6px #dcdcdc;"></div><div class="" style="position:absolute;left:147.00px;top:128.00px;width:1394.00px;height:829.00px;border-radius:11px;box-shadow:inset 0 0 0 1px rgba(255,255,255,.55);pointer-events:none;"></div></div></body></html>
